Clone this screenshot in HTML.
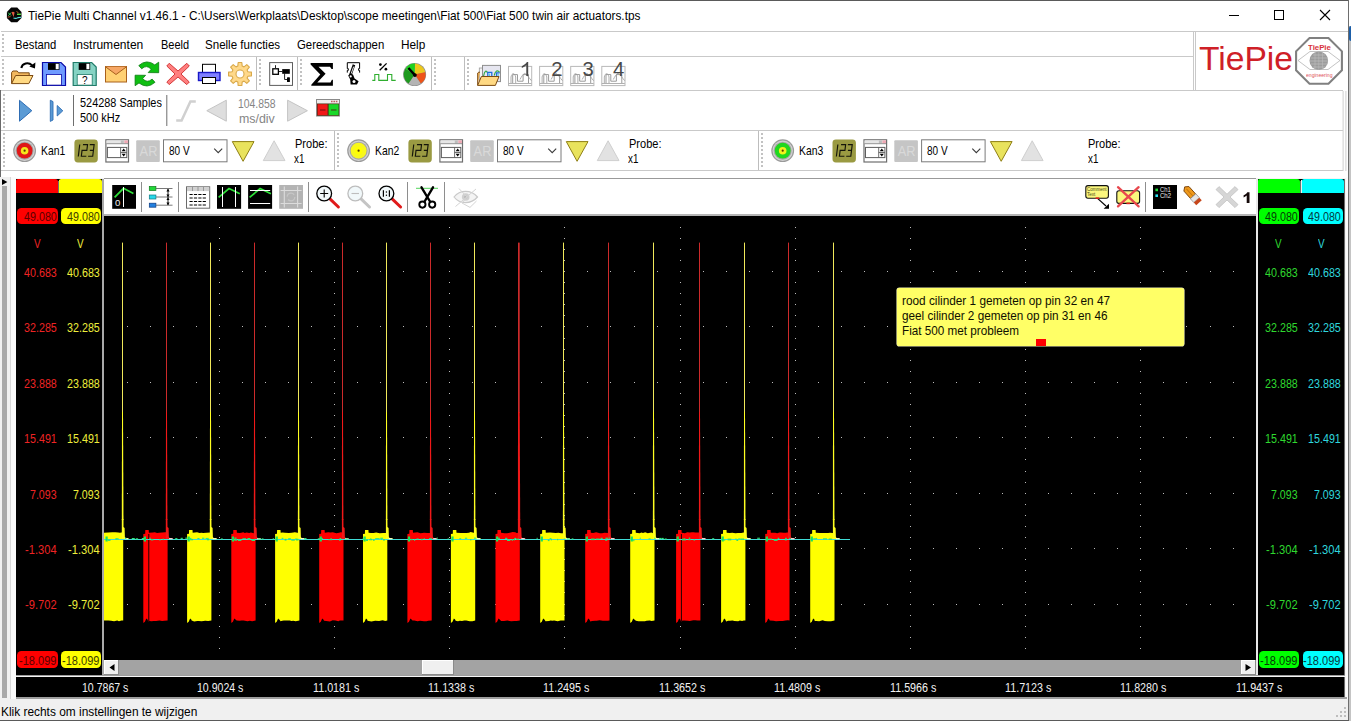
<!DOCTYPE html>
<html><head><meta charset="utf-8"><title>TiePie Multi Channel</title>
<style>
html,body{margin:0;padding:0;overflow:hidden}
body{width:1351px;height:721px;position:relative;overflow:hidden;background:#fff;font-family:"Liberation Sans",sans-serif;font-size:12px}
.b{position:absolute;display:block}
.t{position:absolute;white-space:pre;font-family:"Liberation Sans",sans-serif}
svg{overflow:visible}
</style></head><body>
<div class="b" style="left:0px;top:0px;width:1351px;height:1px;background:#5a5a5a;"></div>
<div class="b" style="left:0px;top:90px;width:1px;height:87px;background:#6a6a6a;"></div>
<div class="b" style="left:1349px;top:0px;width:2px;height:721px;background:#c4c4c4;"></div>
<div class="b" style="left:1349px;top:0px;width:2px;height:26px;background:#fff;"></div>
<div class="b" style="left:1348px;top:0px;width:1px;height:721px;background:#6e6e6e;"></div>
<div class="b" style="left:1349px;top:26px;width:2px;height:15px;background:#1d5fa8;border-radius:2px 0 0 2px"></div>
<svg class="b" style="left:0px;top:0px" width="30" height="30" viewBox="0 0 30 30" ><polygon points="21.50,17.92 17.22,22.20 11.18,22.20 6.90,17.92 6.90,11.88 11.18,7.60 17.22,7.60 21.50,11.88" fill="#050505"/><path d="M8 12.5 L11 15.5 M8.3 15.8 L11 12.6" stroke="#38d060" stroke-width="1" fill="none"/><path d="M11.5 12.2 Q13.3 11 14.6 12.6 L13.6 17 Z" fill="#e05a40"/><path d="M17 14.3 H21" stroke="#58e040" stroke-width="1.4"/><path d="M13.5 18 Q16 19 18 17.6 L21.3 17.3" stroke="#58e0e0" stroke-width="1.1" fill="none"/><path d="M7.5 17.2 L10.5 16.6" stroke="#c05030" stroke-width="1"/><path d="M16.5 11.5 L18.5 12.8" stroke="#c06020" stroke-width="1"/></svg>
<div class="t" style="left:27.60px;top:7px;font-size:13px;line-height:17px;height:17px;color:#000;transform:scaleX(0.9084);transform-origin:0 0;">TiePie Multi Channel v1.46.1 - C:\Users\Werkplaats\Desktop\scope meetingen\Fiat 500\Fiat 500 twin air actuators.tps</div>
<svg class="b" style="left:0px;top:0px" width="1351" height="31" viewBox="0 0 1351 31" ><path d="M1229 15.5 H1239" stroke="#000" stroke-width="1"/><rect x="1274.5" y="10.5" width="9" height="9" fill="none" stroke="#000" stroke-width="1"/><path d="M1320 10 L1330 20 M1330 10 L1320 20" stroke="#000" stroke-width="1.1"/></svg>
<div class="b" style="left:1px;top:31px;width:1347px;height:1px;background:#c9c9c9;"></div>
<div class="b" style="left:1px;top:56px;width:1193px;height:1px;background:#c9c9c9;"></div>
<div class="b" style="left:1px;top:90px;width:1342px;height:1px;background:#c9c9c9;"></div>
<div class="b" style="left:1px;top:130px;width:1342px;height:1px;background:#c9c9c9;"></div>
<div class="b" style="left:1px;top:170px;width:1342px;height:1px;background:#c9c9c9;"></div>
<div class="t" style="left:15.40px;top:37px;font-size:12.4px;line-height:16px;height:16px;color:#000;transform:scaleX(0.9077);transform-origin:0 0;">Bestand</div>
<div class="t" style="left:73.30px;top:37px;font-size:12.4px;line-height:16px;height:16px;color:#000;transform:scaleX(0.9717);transform-origin:0 0;">Instrumenten</div>
<div class="t" style="left:160.50px;top:37px;font-size:12.4px;line-height:16px;height:16px;color:#000;transform:scaleX(0.8864);transform-origin:0 0;">Beeld</div>
<div class="t" style="left:205.20px;top:37px;font-size:12.4px;line-height:16px;height:16px;color:#000;transform:scaleX(0.9324);transform-origin:0 0;">Snelle functies</div>
<div class="t" style="left:297.20px;top:37px;font-size:12.4px;line-height:16px;height:16px;color:#000;transform:scaleX(0.9175);transform-origin:0 0;">Gereedschappen</div>
<div class="t" style="left:401.40px;top:37px;font-size:12.4px;line-height:16px;height:16px;color:#000;transform:scaleX(0.9529);transform-origin:0 0;">Help</div>
<svg class="b" style="left:0px;top:0px" width="1351" height="180" viewBox="0 0 1351 180" ><line x1="3" y1="34" x2="3" y2="54" stroke="#c2c2c2" stroke-width="2" stroke-dasharray="2 2" shape-rendering="crispEdges"/><line x1="3" y1="59" x2="3" y2="87" stroke="#c2c2c2" stroke-width="2" stroke-dasharray="2 2" shape-rendering="crispEdges"/><line x1="4" y1="94" x2="4" y2="128" stroke="#c2c2c2" stroke-width="2" stroke-dasharray="2 2" shape-rendering="crispEdges"/><line x1="4" y1="133" x2="4" y2="167" stroke="#c2c2c2" stroke-width="2" stroke-dasharray="2 2" shape-rendering="crispEdges"/><rect x="256" y="57" width="1" height="33" fill="#bdbdbd"/><line x1="260" y1="59" x2="260" y2="87" stroke="#c2c2c2" stroke-width="2" stroke-dasharray="2 2" shape-rendering="crispEdges"/><rect x="297" y="57" width="1" height="33" fill="#bdbdbd"/><line x1="301" y1="59" x2="301" y2="87" stroke="#c2c2c2" stroke-width="2" stroke-dasharray="2 2" shape-rendering="crispEdges"/><rect x="431" y="57" width="1" height="33" fill="#bdbdbd"/><line x1="435" y1="59" x2="435" y2="87" stroke="#c2c2c2" stroke-width="2" stroke-dasharray="2 2" shape-rendering="crispEdges"/><rect x="464" y="57" width="1" height="33" fill="#bdbdbd"/><line x1="468" y1="59" x2="468" y2="87" stroke="#c2c2c2" stroke-width="2" stroke-dasharray="2 2" shape-rendering="crispEdges"/></svg>
<svg class="b" style="left:0px;top:0px" width="1351" height="95" viewBox="0 0 1351 95" ><rect x="1193" y="31" width="1" height="59" fill="#c9c9c9"/><rect x="1195" y="32" width="1" height="58" fill="#c9c9c9"/><polygon points="1341.91,70.34 1328.49,83.76 1309.51,83.76 1296.09,70.34 1296.09,51.36 1309.51,37.94 1328.49,37.94 1341.91,51.36" fill="#fff" stroke="#808080" stroke-width="2.1"/><path d="M1298 60.5 L1310 51.5 H1328 L1340 60.5 L1328 69.5 H1310 Z" fill="none" stroke="#9a9a9a" stroke-width="0.6"/><circle cx="1318.8" cy="60.7" r="9.3" fill="#9c9c9c"/><path d="M1311 58 H1327 M1310 61 H1328 M1311 64 H1327 M1313 55 H1325 M1313 67 H1325" stroke="#c8c8c8" stroke-width="0.6"/><path d="M1315 52 V69.5 M1318.8 51.5 V70 M1322.5 52 V69.5" stroke="#c0c0c0" stroke-width="0.5"/></svg><div class="t" style="left:1198.60px;top:38px;font-size:34px;line-height:40px;height:40px;color:#cf2027;transform:scaleX(0.9884);transform-origin:0 0;">TiePie</div><div class="t" style="left:1307.60px;top:42px;font-size:7.6px;line-height:11px;height:11px;color:#d8323c;transform:scaleX(1.0292);transform-origin:0 0;font-weight:bold;">TiePie</div><div class="t" style="left:1306.00px;top:71px;font-size:5.4px;line-height:8px;height:8px;color:#e0505a;transform:scaleX(0.9397);transform-origin:0 0;">engineering</div>
<svg class="b" style="left:0px;top:0px" width="1351" height="95" viewBox="0 0 1351 95" ><path d="M11.6 83.5 V72.6 L12.8 71 H17.2 L18.6 72.8 H29.2 V75.5" fill="#f3b85e" stroke="#7c4a12" stroke-width="1" stroke-linejoin="round"/><path d="M11.6 83.6 L15.6 75.5 H33 L28.8 83.6 Z" fill="#ffd983" stroke="#7c4a12" stroke-width="1" stroke-linejoin="round"/><path d="M21.3 68 C22.2 63 28.5 61.8 32 65.2" fill="none" stroke="#000" stroke-width="2"/><path d="M35.4 62.4 L35 68.6 L29.3 66.6 Z" fill="#000"/><path d="M42.5 62.5 H61 L65.5 67 V85.5 H42.5 Z" fill="#6f9bff" stroke="#0a0aa8" stroke-width="1.2" stroke-linejoin="miter"/><rect x="48" y="63.1" width="11.5" height="6.8" fill="#000"/><rect x="55.7" y="63.8" width="3" height="5.4" fill="#fff"/><rect x="46.5" y="74.5" width="15" height="10.6" fill="#fff" stroke="#0a0aa8" stroke-width="0.8"/><path d="M73.2 62.5 H91.7 L96.2 67 V85.5 H73.2 Z" fill="#86d3c4" stroke="#1f7a68" stroke-width="1.2" stroke-linejoin="miter"/><rect x="78.7" y="63.1" width="11.5" height="6.8" fill="#000"/><rect x="86.4" y="63.8" width="3" height="5.4" fill="#fff"/><rect x="77.2" y="74.5" width="15" height="10.6" fill="#fff" stroke="#1f7a68" stroke-width="0.8"/><text x="84.7" y="84.1" font-family="Liberation Sans" font-size="10" text-anchor="middle" fill="#000">?</text><rect x="105.5" y="66.5" width="21" height="15.5" fill="#ffd173" stroke="#a8601c" stroke-width="1"/><path d="M105.5 66.8 L116 74.5 L126.5 66.8" fill="#f6a765" stroke="#a8601c" stroke-width="1"/><path d="M138.8 65.6 Q146.6 58.6 154.8 64.9 L158.7 62.2 L158.7 72.7 L148.2 72.6 L151.2 69.3 Q146.6 64.2 141.7 68.8 Z" fill="#0fbf12" stroke="#0a7a10" stroke-width="0.8" stroke-linejoin="round"/><path d="M138.8 65.6 Q146.6 58.6 154.8 64.9 L158.7 62.2 L158.7 72.7 L148.2 72.6 L151.2 69.3 Q146.6 64.2 141.7 68.8 Z" fill="#0fbf12" stroke="#0a7a10" stroke-width="0.8" stroke-linejoin="round" transform="rotate(180 146.9 73.95)"/><path d="M169.2 63.3 L178 71 L186.8 63.3 L189.3 66 L181 74 L189.3 82 L186.8 84.6 L178 77 L169.2 84.6 L166.8 82 L175 74 L166.8 66 Z" fill="#ff7f7f" stroke="#d43a3a" stroke-width="1" stroke-linejoin="round"/><rect x="202.5" y="64.3" width="13" height="9" fill="#fff" stroke="#000" stroke-width="1"/><rect x="198.5" y="72.5" width="21.5" height="8" fill="#7f7fff" stroke="#1818c8" stroke-width="1.4"/><rect x="202.5" y="77.5" width="13" height="6" fill="#fff" stroke="#000" stroke-width="1"/><polygon points="237.81,66.10 238.15,62.55 241.85,62.55 242.19,66.10 244.04,66.87 246.79,64.60 249.40,67.21 247.13,69.96 247.90,71.81 251.45,72.15 251.45,75.85 247.90,76.19 247.13,78.04 249.40,80.79 246.79,83.40 244.04,81.13 242.19,81.90 241.85,85.45 238.15,85.45 237.81,81.90 235.96,81.13 233.21,83.40 230.60,80.79 232.87,78.04 232.10,76.19 228.55,75.85 228.55,72.15 232.10,71.81 232.87,69.96 230.60,67.21 233.21,64.60 235.96,66.87" fill="#ffd98a" stroke="#d9a94a" stroke-width="1.1" stroke-linejoin="round"/><circle cx="240" cy="74" r="4" fill="#fff" stroke="#d9a94a" stroke-width="1.1"/><rect x="269.7" y="62.6" width="22.8" height="22.8" fill="#fff" stroke="#5e5e5e" stroke-width="1"/><rect x="272.8" y="68.8" width="5.6" height="5.5" fill="#fff" stroke="#000" stroke-width="1.3"/><path d="M275.5 65.2 V68.4 M279 71.5 H282.4 M284.6 73.6 V79.5 H287.2" stroke="#222" stroke-width="1" fill="none"/><rect x="282.2" y="69.1" width="7.6" height="4.7" fill="#000"/><rect x="287" y="77.2" width="2.9" height="4.8" rx="0.6" fill="#000"/><path d="M310.6 63.1 H332.9 V69.1 H331.6 L330 66.8 H318.5 L325.6 73.8 L317.3 82.6 H330.5 L331.9 79.7 H332.9 V85.8 H311.3 V84.8 L320.3 74.6 L310.6 64.5 Z" fill="#000"/><path d="M347.3 72.6 V70.4 H348.3 V68.6 H347.3 V62.7 H359.6 V68.6 H358.6 V70.4 H359.6 V72.6" fill="none" stroke="#000" stroke-width="1"/><path d="M354 64.8 L350.4 75" stroke="#000" stroke-width="2.6"/><path d="M353.7 66.6 L351.2 73.6" stroke="#fff" stroke-width="0.9"/><path d="M348.2 75.4 L350.2 73.6 L353 74.6 L354.6 78.4 L358.6 81.2 L357 84.4 L350.6 84.6 L350.2 79.6 Z" fill="#000"/><circle cx="350.7" cy="76.4" r="1.1" fill="#fff"/><circle cx="354" cy="81.6" r="1.5" fill="#fff"/><path d="M372.3 80.4 H374.8 V74.5 H378.8 V80.4 H387.5 V74.5 H391.8 V80.4 H395.7" fill="none" stroke="#2fae2f" stroke-width="1.1"/><path d="M386.6 63.4 L379.7 70.3" stroke="#000" stroke-width="1.3"/><circle cx="380.4" cy="64.6" r="1.35" fill="#000"/><circle cx="385.9" cy="69.2" r="1.35" fill="#000"/><circle cx="414.6" cy="74.5" r="11.5" fill="#909090"/><path d="M414.60 74.50 L414.98 63.61 A10.9 10.9 0 0 1 425.26 72.23 Z" fill="#edc81c"/><path d="M414.60 74.50 L425.26 72.23 A10.9 10.9 0 0 1 420.70 83.54 Z" fill="#ee5318"/><path d="M414.60 74.50 L420.70 83.54 A10.9 10.9 0 0 1 408.50 83.54 Z" fill="#b4b4b4"/><path d="M414.60 74.50 L408.50 83.54 A10.9 10.9 0 0 1 405.36 68.72 Z" fill="#1f9a1f"/><path d="M414.60 74.50 L405.36 68.72 A10.9 10.9 0 0 1 414.98 63.61 Z" fill="#1fd01f"/><path d="M414.90 75.10 L408.4 68" stroke="#000" stroke-width="2.4"/><circle cx="414.9" cy="75.1" r="1.9" fill="#000"/><rect x="479.3" y="68" width="4" height="12" fill="#f4f4f4" stroke="#9a9a9a" stroke-width="0.8"/><rect x="482.5" y="65.4" width="18" height="16.2" fill="#e6e6f0" stroke="#8e8e8e" stroke-width="1"/><path d="M483.6 76 C484.6 70.6 486.4 70 487.6 73 M494.2 75.5 C495.4 70.4 497.6 69.6 499.6 72.4" fill="none" stroke="#2fa845" stroke-width="1.2"/><path d="M487.8 76.5 V72.4 H491.8 V76.5 M496.6 76.5 V72.8 H499.6" fill="none" stroke="#1f6fe0" stroke-width="1.3"/><path d="M489.6 73.5 V76.5 M498.2 73.8 V76.5" stroke="#40c8e8" stroke-width="1"/><path d="M477.7 85.2 V73 L478.8 72.2 H480" fill="#f3b85e" stroke="#7c4a12" stroke-width="1"/><path d="M477.6 85.4 L481.4 76.5 H499 L495.4 85.4 Z" fill="#ffd983" stroke="#7c4a12" stroke-width="1" stroke-linejoin="round"/><rect x="508.5" y="66.4" width="23.2" height="19.2" fill="#fff" stroke="#b9b9b9" stroke-width="1"/><path d="M511 83.6 V77 C511.9 72.6 514.7 72.6 515.7 77 V83.6 M520 79.5 C521.3 77 523 74 524.7 73.4 C526.7 74 529 78 531.5 80.8" fill="none" stroke="#adadad" stroke-width="1"/><path d="M512.7 83.6 V74.6 H517.5 V81.2 H523.1 V74.6 H528.5 V83.6" fill="none" stroke="#9a9a9a" stroke-width="1"/><path d="M508.5 83.5 H531.5" stroke="#b0b0b0" stroke-width="1"/><rect x="539.6" y="66.4" width="23.2" height="19.2" fill="#fff" stroke="#b9b9b9" stroke-width="1"/><path d="M542.1 83.6 V77 C543 72.6 545.8 72.6 546.8 77 V83.6 M551.1 79.5 C552.4 77 554.1 74 555.8 73.4 C557.8 74 560.1 78 562.6 80.8" fill="none" stroke="#adadad" stroke-width="1"/><path d="M543.8 83.6 V74.6 H548.6 V81.2 H554.2 V74.6 H559.6 V83.6" fill="none" stroke="#9a9a9a" stroke-width="1"/><path d="M539.6 83.5 H562.6" stroke="#b0b0b0" stroke-width="1"/><rect x="570.7" y="66.4" width="23.2" height="19.2" fill="#fff" stroke="#b9b9b9" stroke-width="1"/><path d="M573.2 83.6 V77 C574.1 72.6 576.9 72.6 577.9 77 V83.6 M582.2 79.5 C583.5 77 585.2 74 586.9 73.4 C588.9 74 591.2 78 593.7 80.8" fill="none" stroke="#adadad" stroke-width="1"/><path d="M574.9 83.6 V74.6 H579.7 V81.2 H585.3 V74.6 H590.7 V83.6" fill="none" stroke="#9a9a9a" stroke-width="1"/><path d="M570.7 83.5 H593.7" stroke="#b0b0b0" stroke-width="1"/><rect x="601.8" y="66.4" width="23.2" height="19.2" fill="#fff" stroke="#b9b9b9" stroke-width="1"/><path d="M604.3 83.6 V77 C605.2 72.6 608 72.6 609 77 V83.6 M613.3 79.5 C614.6 77 616.3 74 618 73.4 C620 74 622.3 78 624.8 80.8" fill="none" stroke="#adadad" stroke-width="1"/><path d="M606 83.6 V74.6 H610.8 V81.2 H616.4 V74.6 H621.8 V83.6" fill="none" stroke="#9a9a9a" stroke-width="1"/><path d="M601.8 83.5 H624.8" stroke="#b0b0b0" stroke-width="1"/></svg><svg class="b" style="left:0px;top:0px" width="1351" height="95" viewBox="0 0 1351 95" ><path d="M528.2 76.1 H526.3 V65.3 C525.1 66.5 523.5 67.4 521.8 68 V66.2 C524 65.2 526 63.6 526.9 62 H528.2 Z" fill="#484848"/></svg><div class="t" style="left:551.20px;top:57px;font-size:20.3px;line-height:24px;height:24px;color:#484848;">2</div><div class="t" style="left:582.50px;top:57px;font-size:20.3px;line-height:24px;height:24px;color:#484848;">3</div><div class="t" style="left:612.90px;top:57px;font-size:20.3px;line-height:24px;height:24px;color:#484848;">4</div>
<svg class="b" style="left:0px;top:0px" width="1351" height="135" viewBox="0 0 1351 135" ><path d="M19.5 100.3 L31.8 110.7 L19.5 121.2 Z" fill="#5b9bd5" stroke="#2e6db4" stroke-width="1" stroke-linejoin="round"/><path d="M50.3 100.2 L53 101.6 V120 L50.3 121.4 Z" fill="#5b9bd5" stroke="#2e6db4" stroke-width="0.9" stroke-linejoin="round"/><path d="M57.2 105.5 L62.8 110.8 L57.2 116 Z" fill="#5b9bd5" stroke="#2e6db4" stroke-width="0.9" stroke-linejoin="round"/><rect x="73" y="95" width="1" height="31" fill="#6e6e6e"/><rect x="166.3" y="95" width="1" height="31" fill="#6e6e6e"/><path d="M176.2 120.6 H181.6 L190.4 101.4 H195.8" fill="none" stroke="#d0d0d0" stroke-width="2.5"/><path d="M226.3 100.2 V121.2 L206.8 110.7 Z" fill="#dedede" stroke="#c4c4c4" stroke-width="1" stroke-linejoin="round"/><path d="M287.6 100.2 V121.2 L307.4 110.7 Z" fill="#dedede" stroke="#c4c4c4" stroke-width="1" stroke-linejoin="round"/><rect x="316.5" y="99.5" width="23" height="16.5" fill="#ededed" stroke="#8a8a8a" stroke-width="1"/><rect x="317" y="103.5" width="22" height="12.3" fill="#4a2a10"/><rect x="317.6" y="104.2" width="10" height="11" fill="#f01818"/><rect x="328.6" y="104.2" width="10" height="11" fill="#18d828"/><path d="M320 110 H325.5 M331 110 H336.5" stroke="#501010" stroke-width="1.6" opacity=".55"/><path d="M331 101.5 H337.5" stroke="#c06060" stroke-width="1.4" stroke-dasharray="1.6 0.8"/></svg><div class="t" style="left:79.60px;top:95px;font-size:12.4px;line-height:16px;height:16px;color:#000;transform:scaleX(0.8802);transform-origin:0 0;">524288 Samples</div><div class="t" style="left:79.60px;top:110px;font-size:12.4px;line-height:16px;height:16px;color:#000;transform:scaleX(0.8835);transform-origin:0 0;">500 kHz</div><div class="t" style="left:238.20px;top:96px;font-size:12.4px;line-height:16px;height:16px;color:#858585;transform:scaleX(0.8393);transform-origin:0 0;">104.858</div><div class="t" style="left:238.80px;top:111px;font-size:12.4px;line-height:16px;height:16px;color:#858585;transform:scaleX(0.9986);transform-origin:0 0;">ms/div</div>
<svg class="b" style="left:0px;top:0px" width="1351" height="175" viewBox="0 0 1351 175" ><circle cx="24.6" cy="150.7" r="11.4" fill="#9a9a9a"/><circle cx="24.6" cy="150.7" r="10.2" fill="#d2d2d2"/><circle cx="24.6" cy="150.7" r="9" fill="#a6a6a6"/><circle cx="24.6" cy="150.7" r="7.9" fill="#e01818"/><circle cx="24.6" cy="150.7" r="3.8" fill="#f4e81c"/><circle cx="24.6" cy="150.7" r="1.1" fill="#5a3a00"/><rect x="74.4" y="139.4" width="23.4" height="23.1" rx="3.4" fill="#9a9a42"/><g stroke="#15150a" stroke-width="1.15" fill="none" transform="translate(92.9 0) skewX(-7) translate(-74.4 0)"><path d="M79 144.6 V156.4"/><path d="M82.2 144.6 H86.8 V150.4 H82 V156.2 H87"/><path d="M89 144.6 H93.4 V156.2 H88.8 M89.8 150.4 H93.4"/></g><rect x="105.9" y="139.8" width="22.6" height="22.2" fill="#fff" stroke="#6e6e6e" stroke-width="1.2"/><rect x="106.5" y="140.4" width="21.4" height="3" fill="#e6e6e6"/><rect x="120.8" y="140.4" width="3" height="3" fill="#bdbdbd"/><rect x="124.3" y="140.4" width="3.6" height="3" fill="#f0a8b4"/><path d="M106.4 143.7 H128" stroke="#8a8a8a" stroke-width="0.9"/><rect x="107.4" y="147.4" width="19.4" height="10.2" fill="#fff" stroke="#5e5e5e" stroke-width="1"/><path d="M120.6 147.4 V157.6 M120.6 152.5 H126.8" stroke="#5e5e5e" stroke-width="0.9"/><path d="M121.6 151.2 L123.7 148.6 L125.8 151.2 Z M121.6 153.8 L123.7 156.4 L125.8 153.8 Z" fill="#000"/><rect x="136.2" y="140.3" width="23.6" height="21.6" rx="1" fill="#c5c5c5"/><text x="139.6" y="156.2" font-family="Liberation Sans" font-size="15.4" fill="#d9d9d9" textLength="17.8" lengthAdjust="spacingAndGlyphs">AR</text><rect x="163.5" y="139.8" width="63.5" height="22" fill="#fff" stroke="#7a7a7a" stroke-width="1"/><path d="M214.2 148.6 L218.2 152.6 L222.2 148.6" fill="none" stroke="#3a3a3a" stroke-width="1.1"/><path d="M232.3 141.6 H254 L243.1 161.3 Z" fill="#e9e35d" stroke="#8f7f14" stroke-width="1" stroke-linejoin="round"/><path d="M263.3 160.6 H285 L274.1 140.8 Z" fill="#e2e2e2" stroke="#cfcfcf" stroke-width="1" stroke-linejoin="round"/></svg><div class="t" style="left:40.60px;top:143px;font-size:12.4px;line-height:16px;height:16px;color:#000;transform:scaleX(0.8359);transform-origin:0 0;">Kan1</div><div class="t" style="left:168.60px;top:143px;font-size:12.4px;line-height:16px;height:16px;color:#000;transform:scaleX(0.8078);transform-origin:0 0;">80 V</div><div class="t" style="left:294.70px;top:136px;font-size:12.4px;line-height:16px;height:16px;color:#000;transform:scaleX(0.8892);transform-origin:0 0;">Probe:</div><div class="t" style="left:294.40px;top:151px;font-size:12.4px;line-height:16px;height:16px;color:#000;transform:scaleX(0.7939);transform-origin:0 0;">x1</div><svg class="b" style="left:0px;top:0px" width="1351" height="175" viewBox="0 0 1351 175" ><circle cx="358.6" cy="150.7" r="11.4" fill="#9a9a9a"/><circle cx="358.6" cy="150.7" r="10.2" fill="#d2d2d2"/><circle cx="358.6" cy="150.7" r="9" fill="#a6a6a6"/><circle cx="358.6" cy="150.7" r="7.9" fill="#f8f81a"/><circle cx="358.6" cy="150.7" r="3.8" fill="#ffff00"/><circle cx="358.6" cy="150.7" r="1.1" fill="#5a3a00"/><rect x="408.4" y="139.4" width="23.4" height="23.1" rx="3.4" fill="#9a9a42"/><g stroke="#15150a" stroke-width="1.15" fill="none" transform="translate(426.9 0) skewX(-7) translate(-408.4 0)"><path d="M413 144.6 V156.4"/><path d="M416.2 144.6 H420.8 V150.4 H416 V156.2 H421"/><path d="M423 144.6 H427.4 V156.2 H422.8 M423.8 150.4 H427.4"/></g><rect x="439.9" y="139.8" width="22.6" height="22.2" fill="#fff" stroke="#6e6e6e" stroke-width="1.2"/><rect x="440.5" y="140.4" width="21.4" height="3" fill="#e6e6e6"/><rect x="454.8" y="140.4" width="3" height="3" fill="#bdbdbd"/><rect x="458.3" y="140.4" width="3.6" height="3" fill="#f0a8b4"/><path d="M440.4 143.7 H462" stroke="#8a8a8a" stroke-width="0.9"/><rect x="441.4" y="147.4" width="19.4" height="10.2" fill="#fff" stroke="#5e5e5e" stroke-width="1"/><path d="M454.6 147.4 V157.6 M454.6 152.5 H460.8" stroke="#5e5e5e" stroke-width="0.9"/><path d="M455.6 151.2 L457.7 148.6 L459.8 151.2 Z M455.6 153.8 L457.7 156.4 L459.8 153.8 Z" fill="#000"/><rect x="470.2" y="140.3" width="23.6" height="21.6" rx="1" fill="#c5c5c5"/><text x="473.6" y="156.2" font-family="Liberation Sans" font-size="15.4" fill="#d9d9d9" textLength="17.8" lengthAdjust="spacingAndGlyphs">AR</text><rect x="497.5" y="139.8" width="63.5" height="22" fill="#fff" stroke="#7a7a7a" stroke-width="1"/><path d="M548.2 148.6 L552.2 152.6 L556.2 148.6" fill="none" stroke="#3a3a3a" stroke-width="1.1"/><path d="M566.3 141.6 H588 L577.1 161.3 Z" fill="#e9e35d" stroke="#8f7f14" stroke-width="1" stroke-linejoin="round"/><path d="M597.3 160.6 H619 L608.1 140.8 Z" fill="#e2e2e2" stroke="#cfcfcf" stroke-width="1" stroke-linejoin="round"/></svg><div class="t" style="left:374.60px;top:143px;font-size:12.4px;line-height:16px;height:16px;color:#000;transform:scaleX(0.8359);transform-origin:0 0;">Kan2</div><div class="t" style="left:502.60px;top:143px;font-size:12.4px;line-height:16px;height:16px;color:#000;transform:scaleX(0.8078);transform-origin:0 0;">80 V</div><div class="t" style="left:628.70px;top:136px;font-size:12.4px;line-height:16px;height:16px;color:#000;transform:scaleX(0.8892);transform-origin:0 0;">Probe:</div><div class="t" style="left:628.40px;top:151px;font-size:12.4px;line-height:16px;height:16px;color:#000;transform:scaleX(0.7939);transform-origin:0 0;">x1</div><svg class="b" style="left:0px;top:0px" width="1351" height="175" viewBox="0 0 1351 175" ><circle cx="782.7" cy="150.7" r="11.4" fill="#9a9a9a"/><circle cx="782.7" cy="150.7" r="10.2" fill="#d2d2d2"/><circle cx="782.7" cy="150.7" r="9" fill="#a6a6a6"/><circle cx="782.7" cy="150.7" r="7.9" fill="#20d820"/><circle cx="782.7" cy="150.7" r="3.8" fill="#f2f21c"/><circle cx="782.7" cy="150.7" r="1.1" fill="#5a3a00"/><rect x="832.5" y="139.4" width="23.4" height="23.1" rx="3.4" fill="#9a9a42"/><g stroke="#15150a" stroke-width="1.15" fill="none" transform="translate(851 0) skewX(-7) translate(-832.5 0)"><path d="M837.1 144.6 V156.4"/><path d="M840.3 144.6 H844.9 V150.4 H840.1 V156.2 H845.1"/><path d="M847.1 144.6 H851.5 V156.2 H846.9 M847.9 150.4 H851.5"/></g><rect x="864" y="139.8" width="22.6" height="22.2" fill="#fff" stroke="#6e6e6e" stroke-width="1.2"/><rect x="864.6" y="140.4" width="21.4" height="3" fill="#e6e6e6"/><rect x="878.9" y="140.4" width="3" height="3" fill="#bdbdbd"/><rect x="882.4" y="140.4" width="3.6" height="3" fill="#f0a8b4"/><path d="M864.5 143.7 H886.1" stroke="#8a8a8a" stroke-width="0.9"/><rect x="865.5" y="147.4" width="19.4" height="10.2" fill="#fff" stroke="#5e5e5e" stroke-width="1"/><path d="M878.7 147.4 V157.6 M878.7 152.5 H884.9" stroke="#5e5e5e" stroke-width="0.9"/><path d="M879.7 151.2 L881.8 148.6 L883.9 151.2 Z M879.7 153.8 L881.8 156.4 L883.9 153.8 Z" fill="#000"/><rect x="894.3" y="140.3" width="23.6" height="21.6" rx="1" fill="#c5c5c5"/><text x="897.7" y="156.2" font-family="Liberation Sans" font-size="15.4" fill="#d9d9d9" textLength="17.8" lengthAdjust="spacingAndGlyphs">AR</text><rect x="921.6" y="139.8" width="63.5" height="22" fill="#fff" stroke="#7a7a7a" stroke-width="1"/><path d="M972.3 148.6 L976.3 152.6 L980.3 148.6" fill="none" stroke="#3a3a3a" stroke-width="1.1"/><path d="M990.4 141.6 H1012.1 L1001.2 161.3 Z" fill="#e9e35d" stroke="#8f7f14" stroke-width="1" stroke-linejoin="round"/><path d="M1021.4 160.6 H1043.1 L1032.2 140.8 Z" fill="#e2e2e2" stroke="#cfcfcf" stroke-width="1" stroke-linejoin="round"/></svg><div class="t" style="left:798.70px;top:143px;font-size:12.4px;line-height:16px;height:16px;color:#000;transform:scaleX(0.8359);transform-origin:0 0;">Kan3</div><div class="t" style="left:926.70px;top:143px;font-size:12.4px;line-height:16px;height:16px;color:#000;transform:scaleX(0.8078);transform-origin:0 0;">80 V</div><div class="t" style="left:1088.20px;top:136px;font-size:12.4px;line-height:16px;height:16px;color:#000;transform:scaleX(0.8892);transform-origin:0 0;">Probe:</div><div class="t" style="left:1087.90px;top:151px;font-size:12.4px;line-height:16px;height:16px;color:#000;transform:scaleX(0.7939);transform-origin:0 0;">x1</div><svg class="b" style="left:0px;top:0px" width="1351" height="175" viewBox="0 0 1351 175" ><rect x="334" y="131" width="1" height="39" fill="#bdbdbd"/><line x1="338" y1="133" x2="338" y2="167" stroke="#c2c2c2" stroke-width="2" stroke-dasharray="2 2" shape-rendering="crispEdges"/><rect x="758" y="131" width="1" height="39" fill="#bdbdbd"/><line x1="762" y1="133" x2="762" y2="167" stroke="#c2c2c2" stroke-width="2" stroke-dasharray="2 2" shape-rendering="crispEdges"/><rect x="1342.6" y="91" width="1" height="80" fill="#d0d0d0"/><rect x="1345.4" y="91" width="1" height="82" fill="#d0d0d0"/></svg>
<div class="b" style="left:1px;top:171px;width:1347px;height:7px;background:#fff;"></div><div class="b" style="left:1px;top:171px;width:1347px;height:1px;background:#fff;"></div><div class="b" style="left:1px;top:177.6px;width:1347px;height:522px;background:#f4f4f4;"></div><div class="b" style="left:0px;top:177px;width:10px;height:523px;background:#f0f0f0;"></div><div class="b" style="left:2px;top:186px;width:4.5px;height:512px;background:#a8a8a8;"></div><div class="b" style="left:10px;top:177px;width:6px;height:523px;background:#fbfbfb;"></div><div class="b" style="left:9.5px;top:177px;width:1.5px;height:523px;background:#d9d9d9;"></div><svg class="b" style="left:0;top:176px" width="12" height="12"><path d="M2 3 L7.4 6 L2 9 Z" fill="#000"/></svg><div class="b" style="left:16px;top:179px;width:1328.5px;height:518.5px;background:#000;"></div><div class="b" style="left:16px;top:178.8px;width:41.6px;height:14.2px;background:#ff0000;border-radius:2px 3px 0 0"></div><div class="b" style="left:57.6px;top:180.5px;width:0.9px;height:12.5px;background:#707070;"></div><div class="b" style="left:58.5px;top:179.5px;width:1px;height:13.5px;background:#f0f0e0;"></div><div class="b" style="left:59.4px;top:178.8px;width:43px;height:14.2px;background:#ffff00;border-radius:2px 3px 0 0"></div><div class="b" style="left:1258.2px;top:178.8px;width:41.5px;height:14px;background:#00ff00;border-radius:2px 3px 0 0"></div><div class="b" style="left:1299.7px;top:180.5px;width:1px;height:12.3px;background:#707070;"></div><div class="b" style="left:1300.7px;top:179.5px;width:1.2px;height:13.3px;background:#e8f4f0;"></div><div class="b" style="left:1301.9px;top:178.8px;width:42.5px;height:14px;background:#00ffff;border-radius:2px 3px 0 0"></div><div class="b" style="left:102.4px;top:179px;width:1.7px;height:498px;background:#a9a9a9;"></div><div class="b" style="left:1256px;top:179px;width:2px;height:498px;background:#e9e9e9;"></div><div class="b" style="left:1344.3px;top:179px;width:1.2px;height:520px;background:#6a6a6a;"></div><div class="b" style="left:1345.5px;top:177px;width:2.5px;height:523px;background:#fcfcfc;"></div><div class="b" style="left:104px;top:178px;width:1152px;height:1px;background:#9a9a9a;"></div><div class="b" style="left:104px;top:179px;width:1152px;height:35px;background:#fff;"></div><div class="b" style="left:104px;top:214px;width:1152px;height:2px;background:#b5b5b5;"></div><div class="b" style="left:104px;top:660px;width:1152px;height:15.3px;background:#a3a3a3;"></div><div class="b" style="left:104px;top:660px;width:15px;height:15.3px;background:#f0f0f0;box-shadow:inset -1px -1px 0 #8a8a8a, inset 1px 1px 0 #fff"></div><div class="b" style="left:1241px;top:660px;width:15px;height:15.3px;background:#f0f0f0;box-shadow:inset -1px -1px 0 #8a8a8a, inset 1px 1px 0 #fff"></div><div class="b" style="left:422px;top:660px;width:32.4px;height:15.3px;background:#f0f0f0;box-shadow:inset -1px -1px 0 #8a8a8a, inset 1px 1px 0 #fff"></div><svg class="b" style="left:104px;top:660px" width="1152" height="16"><path d="M10.5 4 V11 L5.5 7.5 Z M1141.5 4 V11 L1147 7.5 Z" fill="#000"/></svg><div class="b" style="left:16px;top:674.7px;width:1328.5px;height:1.2px;background:#9c9c9c;"></div><div class="b" style="left:16px;top:675.9px;width:1328.5px;height:1.1px;background:#f4f4f4;"></div><div class="b" style="left:16px;top:697px;width:1330.5px;height:2.2px;background:#9e9e9e;"></div>
<svg class="b" style="left:104px;top:216px" width="1152" height="444" viewBox="104 216 1152 444">
<rect x="104" y="216" width="1152" height="444" fill="#000"/>
<path d="M127 271.5h1M150 271.5h1M173 271.5h1M196 271.5h1M219 271.5h1M242 271.5h1M265 271.5h1M288 271.5h1M311 271.5h1M334 271.5h1M357 271.5h1M380 271.5h1M403 271.5h1M426 271.5h1M449 271.5h1M472 271.5h1M495 271.5h1M518 271.5h1M541 271.5h1M564 271.5h1M587 271.5h1M610 271.5h1M634 271.5h1M657 271.5h1M680 271.5h1M703 271.5h1M726 271.5h1M749 271.5h1M772 271.5h1M795 271.5h1M818 271.5h1M841 271.5h1M864 271.5h1M887 271.5h1M910 271.5h1M933 271.5h1M956 271.5h1M979 271.5h1M1002 271.5h1M1025 271.5h1M1048 271.5h1M1071 271.5h1M1094 271.5h1M1117 271.5h1M1140 271.5h1M1163 271.5h1M1186 271.5h1M1210 271.5h1M1233 271.5h1M127 326.5h1M150 326.5h1M173 326.5h1M196 326.5h1M219 326.5h1M242 326.5h1M265 326.5h1M288 326.5h1M311 326.5h1M334 326.5h1M357 326.5h1M380 326.5h1M403 326.5h1M426 326.5h1M449 326.5h1M472 326.5h1M495 326.5h1M518 326.5h1M541 326.5h1M564 326.5h1M587 326.5h1M610 326.5h1M634 326.5h1M657 326.5h1M680 326.5h1M703 326.5h1M726 326.5h1M749 326.5h1M772 326.5h1M795 326.5h1M818 326.5h1M841 326.5h1M864 326.5h1M887 326.5h1M910 326.5h1M933 326.5h1M956 326.5h1M979 326.5h1M1002 326.5h1M1025 326.5h1M1048 326.5h1M1071 326.5h1M1094 326.5h1M1117 326.5h1M1140 326.5h1M1163 326.5h1M1186 326.5h1M1210 326.5h1M1233 326.5h1M127 382.5h1M150 382.5h1M173 382.5h1M196 382.5h1M219 382.5h1M242 382.5h1M265 382.5h1M288 382.5h1M311 382.5h1M334 382.5h1M357 382.5h1M380 382.5h1M403 382.5h1M426 382.5h1M449 382.5h1M472 382.5h1M495 382.5h1M518 382.5h1M541 382.5h1M564 382.5h1M587 382.5h1M610 382.5h1M634 382.5h1M657 382.5h1M680 382.5h1M703 382.5h1M726 382.5h1M749 382.5h1M772 382.5h1M795 382.5h1M818 382.5h1M841 382.5h1M864 382.5h1M887 382.5h1M910 382.5h1M933 382.5h1M956 382.5h1M979 382.5h1M1002 382.5h1M1025 382.5h1M1048 382.5h1M1071 382.5h1M1094 382.5h1M1117 382.5h1M1140 382.5h1M1163 382.5h1M1186 382.5h1M1210 382.5h1M1233 382.5h1M127 437.5h1M150 437.5h1M173 437.5h1M196 437.5h1M219 437.5h1M242 437.5h1M265 437.5h1M288 437.5h1M311 437.5h1M334 437.5h1M357 437.5h1M380 437.5h1M403 437.5h1M426 437.5h1M449 437.5h1M472 437.5h1M495 437.5h1M518 437.5h1M541 437.5h1M564 437.5h1M587 437.5h1M610 437.5h1M634 437.5h1M657 437.5h1M680 437.5h1M703 437.5h1M726 437.5h1M749 437.5h1M772 437.5h1M795 437.5h1M818 437.5h1M841 437.5h1M864 437.5h1M887 437.5h1M910 437.5h1M933 437.5h1M956 437.5h1M979 437.5h1M1002 437.5h1M1025 437.5h1M1048 437.5h1M1071 437.5h1M1094 437.5h1M1117 437.5h1M1140 437.5h1M1163 437.5h1M1186 437.5h1M1210 437.5h1M1233 437.5h1M127 493.5h1M150 493.5h1M173 493.5h1M196 493.5h1M219 493.5h1M242 493.5h1M265 493.5h1M288 493.5h1M311 493.5h1M334 493.5h1M357 493.5h1M380 493.5h1M403 493.5h1M426 493.5h1M449 493.5h1M472 493.5h1M495 493.5h1M518 493.5h1M541 493.5h1M564 493.5h1M587 493.5h1M610 493.5h1M634 493.5h1M657 493.5h1M680 493.5h1M703 493.5h1M726 493.5h1M749 493.5h1M772 493.5h1M795 493.5h1M818 493.5h1M841 493.5h1M864 493.5h1M887 493.5h1M910 493.5h1M933 493.5h1M956 493.5h1M979 493.5h1M1002 493.5h1M1025 493.5h1M1048 493.5h1M1071 493.5h1M1094 493.5h1M1117 493.5h1M1140 493.5h1M1163 493.5h1M1186 493.5h1M1210 493.5h1M1233 493.5h1M127 548.5h1M150 548.5h1M173 548.5h1M196 548.5h1M219 548.5h1M242 548.5h1M265 548.5h1M288 548.5h1M311 548.5h1M334 548.5h1M357 548.5h1M380 548.5h1M403 548.5h1M426 548.5h1M449 548.5h1M472 548.5h1M495 548.5h1M518 548.5h1M541 548.5h1M564 548.5h1M587 548.5h1M610 548.5h1M634 548.5h1M657 548.5h1M680 548.5h1M703 548.5h1M726 548.5h1M749 548.5h1M772 548.5h1M795 548.5h1M818 548.5h1M841 548.5h1M864 548.5h1M887 548.5h1M910 548.5h1M933 548.5h1M956 548.5h1M979 548.5h1M1002 548.5h1M1025 548.5h1M1048 548.5h1M1071 548.5h1M1094 548.5h1M1117 548.5h1M1140 548.5h1M1163 548.5h1M1186 548.5h1M1210 548.5h1M1233 548.5h1M127 604.5h1M150 604.5h1M173 604.5h1M196 604.5h1M219 604.5h1M242 604.5h1M265 604.5h1M288 604.5h1M311 604.5h1M334 604.5h1M357 604.5h1M380 604.5h1M403 604.5h1M426 604.5h1M449 604.5h1M472 604.5h1M495 604.5h1M518 604.5h1M541 604.5h1M564 604.5h1M587 604.5h1M610 604.5h1M634 604.5h1M657 604.5h1M680 604.5h1M703 604.5h1M726 604.5h1M749 604.5h1M772 604.5h1M795 604.5h1M818 604.5h1M841 604.5h1M864 604.5h1M887 604.5h1M910 604.5h1M933 604.5h1M956 604.5h1M979 604.5h1M1002 604.5h1M1025 604.5h1M1048 604.5h1M1071 604.5h1M1094 604.5h1M1117 604.5h1M1140 604.5h1M1163 604.5h1M1186 604.5h1M1210 604.5h1M1233 604.5h1M219 227.5h1M219 238.5h1M219 249.5h1M219 260.5h1M219 282.5h1M219 293.5h1M219 304.5h1M219 315.5h1M219 338.5h1M219 349.5h1M219 360.5h1M219 371.5h1M219 393.5h1M219 404.5h1M219 415.5h1M219 426.5h1M219 448.5h1M219 459.5h1M219 471.5h1M219 482.5h1M219 504.5h1M219 515.5h1M219 526.5h1M219 537.5h1M219 559.5h1M219 570.5h1M219 581.5h1M219 592.5h1M219 615.5h1M219 626.5h1M219 637.5h1M219 648.5h1M334 227.5h1M334 238.5h1M334 249.5h1M334 260.5h1M334 282.5h1M334 293.5h1M334 304.5h1M334 315.5h1M334 338.5h1M334 349.5h1M334 360.5h1M334 371.5h1M334 393.5h1M334 404.5h1M334 415.5h1M334 426.5h1M334 448.5h1M334 459.5h1M334 471.5h1M334 482.5h1M334 504.5h1M334 515.5h1M334 526.5h1M334 537.5h1M334 559.5h1M334 570.5h1M334 581.5h1M334 592.5h1M334 615.5h1M334 626.5h1M334 637.5h1M334 648.5h1M449 227.5h1M449 238.5h1M449 249.5h1M449 260.5h1M449 282.5h1M449 293.5h1M449 304.5h1M449 315.5h1M449 338.5h1M449 349.5h1M449 360.5h1M449 371.5h1M449 393.5h1M449 404.5h1M449 415.5h1M449 426.5h1M449 448.5h1M449 459.5h1M449 471.5h1M449 482.5h1M449 504.5h1M449 515.5h1M449 526.5h1M449 537.5h1M449 559.5h1M449 570.5h1M449 581.5h1M449 592.5h1M449 615.5h1M449 626.5h1M449 637.5h1M449 648.5h1M564 227.5h1M564 238.5h1M564 249.5h1M564 260.5h1M564 282.5h1M564 293.5h1M564 304.5h1M564 315.5h1M564 338.5h1M564 349.5h1M564 360.5h1M564 371.5h1M564 393.5h1M564 404.5h1M564 415.5h1M564 426.5h1M564 448.5h1M564 459.5h1M564 471.5h1M564 482.5h1M564 504.5h1M564 515.5h1M564 526.5h1M564 537.5h1M564 559.5h1M564 570.5h1M564 581.5h1M564 592.5h1M564 615.5h1M564 626.5h1M564 637.5h1M564 648.5h1M680 227.5h1M680 238.5h1M680 249.5h1M680 260.5h1M680 282.5h1M680 293.5h1M680 304.5h1M680 315.5h1M680 338.5h1M680 349.5h1M680 360.5h1M680 371.5h1M680 393.5h1M680 404.5h1M680 415.5h1M680 426.5h1M680 448.5h1M680 459.5h1M680 471.5h1M680 482.5h1M680 504.5h1M680 515.5h1M680 526.5h1M680 537.5h1M680 559.5h1M680 570.5h1M680 581.5h1M680 592.5h1M680 615.5h1M680 626.5h1M680 637.5h1M680 648.5h1M795 227.5h1M795 238.5h1M795 249.5h1M795 260.5h1M795 282.5h1M795 293.5h1M795 304.5h1M795 315.5h1M795 338.5h1M795 349.5h1M795 360.5h1M795 371.5h1M795 393.5h1M795 404.5h1M795 415.5h1M795 426.5h1M795 448.5h1M795 459.5h1M795 471.5h1M795 482.5h1M795 504.5h1M795 515.5h1M795 526.5h1M795 537.5h1M795 559.5h1M795 570.5h1M795 581.5h1M795 592.5h1M795 615.5h1M795 626.5h1M795 637.5h1M795 648.5h1M910 227.5h1M910 238.5h1M910 249.5h1M910 260.5h1M910 282.5h1M910 293.5h1M910 304.5h1M910 315.5h1M910 338.5h1M910 349.5h1M910 360.5h1M910 371.5h1M910 393.5h1M910 404.5h1M910 415.5h1M910 426.5h1M910 448.5h1M910 459.5h1M910 471.5h1M910 482.5h1M910 504.5h1M910 515.5h1M910 526.5h1M910 537.5h1M910 559.5h1M910 570.5h1M910 581.5h1M910 592.5h1M910 615.5h1M910 626.5h1M910 637.5h1M910 648.5h1M1025 227.5h1M1025 238.5h1M1025 249.5h1M1025 260.5h1M1025 282.5h1M1025 293.5h1M1025 304.5h1M1025 315.5h1M1025 338.5h1M1025 349.5h1M1025 360.5h1M1025 371.5h1M1025 393.5h1M1025 404.5h1M1025 415.5h1M1025 426.5h1M1025 448.5h1M1025 459.5h1M1025 471.5h1M1025 482.5h1M1025 504.5h1M1025 515.5h1M1025 526.5h1M1025 537.5h1M1025 559.5h1M1025 570.5h1M1025 581.5h1M1025 592.5h1M1025 615.5h1M1025 626.5h1M1025 637.5h1M1025 648.5h1M1140 227.5h1M1140 238.5h1M1140 249.5h1M1140 260.5h1M1140 282.5h1M1140 293.5h1M1140 304.5h1M1140 315.5h1M1140 338.5h1M1140 349.5h1M1140 360.5h1M1140 371.5h1M1140 393.5h1M1140 404.5h1M1140 415.5h1M1140 426.5h1M1140 448.5h1M1140 459.5h1M1140 471.5h1M1140 482.5h1M1140 504.5h1M1140 515.5h1M1140 526.5h1M1140 537.5h1M1140 559.5h1M1140 570.5h1M1140 581.5h1M1140 592.5h1M1140 615.5h1M1140 626.5h1M1140 637.5h1M1140 648.5h1" stroke="#bcbcbc" stroke-width="1" shape-rendering="crispEdges" fill="none"/>
<polygon fill="#ffff00" points="104.0,620.6 104.0,532.8 112.3,532.3 115.4,532.2 118.3,532.5 119.9,532.7 121.5,532.6 123.2,532.0 123.2,620.6 121.5,620.4 119.0,621.2 117.2,620.5 114.1,621.3 111.1,620.7 108.5,620.4"/>
<rect x="122" y="242.6" width="1" height="170" fill="#f0e85a"/>
<polygon fill="#ffff20" points="122,412 123,412 123.5,520 121.8,520"/>
<path fill="#ffff20" d="M121.8,539.0 L121.8,519 L123.5,519 L123.5,527 L124.6,528 L124.9,537 C125.6,538.4 126.6,538.6 129.0,538.5 L129.0,539.5 Z"/>
<polygon fill="#ff0000" points="143.3,623.0 143.3,534.0 145.2,533.8 145.3,530.1 148.7,529.9 148.9,532.8 152.9,532.4 154.8,532.2 157.1,533.1 159.0,532.8 162.1,532.5 165.0,532.2 166.6,532.3 167.6,532.0 167.6,620.6 164.4,620.8 162.1,620.9 159.5,620.6 156.0,621.1 153.9,620.9 151.1,621.3 147.8,620.6 147.5,619.6 146.3,618.4 144.9,621.8"/>
<rect x="166" y="242.6" width="1" height="170" fill="#cc2a2a"/>
<polygon fill="#f01818" points="166,412 167,412 167.4,520 165.8,520"/>
<path fill="#f01818" d="M165.8,539.0 L165.8,519 L167.4,519 L167.5,527 L168.6,528 L168.9,537 C169.6,538.4 170.6,538.6 173.0,538.5 L173.0,539.5 Z"/>
<polygon fill="#ffff00" points="187.1,623.0 187.1,534.0 189.0,533.8 189.1,530.1 192.5,529.9 192.7,532.8 197.1,532.2 199.6,533.0 201.5,532.7 203.1,532.9 206.5,532.8 210.2,532.5 211.4,532.0 211.4,620.6 208.2,621.0 205.2,620.8 201.6,621.3 198.9,621.0 197.3,621.1 194.2,621.4 191.6,620.6 191.3,619.6 190.1,618.4 188.7,621.8"/>
<rect x="210" y="242.6" width="1" height="170" fill="#f0e85a"/>
<polygon fill="#ffff20" points="210,412 211,412 211.4,520 209.8,520"/>
<path fill="#ffff20" d="M209.8,539.0 L209.8,519 L211.4,519 L211.5,527 L212.6,528 L212.9,537 C213.6,538.4 214.6,538.6 217.0,538.5 L217.0,539.5 Z"/>
<polygon fill="#ff0000" points="231.3,623.0 231.3,534.0 233.2,533.8 233.3,530.1 236.7,529.9 236.9,532.8 239.8,532.9 241.3,532.7 243.2,532.2 244.9,533.0 246.7,532.4 249.2,533.1 250.9,532.6 253.8,533.2 255.6,532.0 255.6,620.6 252.1,621.3 249.9,620.8 247.5,621.3 243.6,620.5 241.6,620.6 239.5,620.8 236.6,620.6 235.5,619.6 234.3,618.4 232.9,621.8"/>
<rect x="254" y="242.6" width="1" height="170" fill="#cc2a2a"/>
<polygon fill="#f01818" points="254,412 255,412 255.4,520 253.8,520"/>
<path fill="#f01818" d="M253.8,539.0 L253.8,519 L255.4,519 L255.5,527 L256.6,528 L256.9,537 C257.6,538.4 258.6,538.6 261.0,538.5 L261.0,539.5 Z"/>
<polygon fill="#ffff00" points="275.1,623.0 275.1,534.0 277.0,533.8 277.1,530.1 280.5,529.9 280.7,532.8 282.6,532.6 285.0,532.8 288.9,532.9 291.7,532.8 294.9,532.2 298.6,533.0 299.4,532.0 299.4,620.6 295.7,621.2 293.2,620.7 291.5,621.0 289.8,620.4 287.8,620.5 285.4,620.4 283.9,620.5 282.2,620.7 280.6,621.3 279.3,619.6 278.1,618.4 276.7,621.8"/>
<rect x="298" y="242.6" width="1" height="170" fill="#f0e85a"/>
<polygon fill="#ffff20" points="298,412 299,412 299.4,520 297.9,520"/>
<path fill="#ffff20" d="M297.9,539.0 L297.9,519 L299.4,519 L299.5,527 L300.6,528 L300.9,537 C301.6,538.4 302.6,538.6 305.0,538.5 L305.0,539.5 Z"/>
<polygon fill="#ff0000" points="319.2,623.0 319.2,534.0 321.1,533.8 321.2,530.1 324.6,529.9 324.8,532.8 328.2,532.3 330.4,532.5 332.8,532.2 336.4,533.3 339.1,532.7 340.8,532.2 343.1,532.4 343.5,532.0 343.5,620.6 339.9,620.5 338.4,621.3 335.5,620.5 332.7,620.3 329.9,621.4 326.2,621.1 324.1,620.7 323.4,619.6 322.2,618.4 320.8,621.8"/>
<rect x="342" y="242.6" width="1" height="170" fill="#cc2a2a"/>
<polygon fill="#f01818" points="342,412 343,412 343.4,520 341.9,520"/>
<path fill="#f01818" d="M341.9,539.0 L341.9,519 L343.4,519 L343.5,527 L344.6,528 L344.9,537 C345.6,538.4 346.6,538.6 349.0,538.5 L349.0,539.5 Z"/>
<polygon fill="#ffff00" points="363.0,623.0 363.0,534.0 364.9,533.8 365.0,530.1 368.4,529.9 368.6,532.8 370.9,533.0 373.7,533.0 376.1,532.4 379.6,533.3 383.2,533.1 386.8,533.0 387.3,532.0 387.3,620.6 385.2,620.9 382.8,620.3 381.3,620.6 379.1,621.1 375.2,620.8 371.4,621.4 367.5,620.7 367.2,619.6 366.0,618.4 364.6,621.8"/>
<rect x="386" y="242.6" width="1" height="170" fill="#f0e85a"/>
<polygon fill="#ffff20" points="386,412 387,412 387.4,520 385.9,520"/>
<path fill="#ffff20" d="M385.9,539.0 L385.9,519 L387.4,519 L387.5,527 L388.6,528 L388.9,537 C389.6,538.4 390.6,538.6 393.0,538.5 L393.0,539.5 Z"/>
<polygon fill="#ff0000" points="407.4,623.0 407.4,534.0 409.3,533.8 409.4,530.1 412.8,529.9 413.0,532.8 415.5,532.4 417.4,532.3 420.5,533.2 424.1,532.7 427.2,533.1 428.9,532.9 431.7,533.0 431.7,532.0 431.7,620.6 428.3,620.8 426.4,621.2 424.0,621.2 420.1,620.7 417.6,621.3 414.3,620.5 412.5,620.5 411.6,619.6 410.4,618.4 409.0,621.8"/>
<rect x="430" y="242.6" width="1" height="170" fill="#cc2a2a"/>
<polygon fill="#f01818" points="430,412 431,412 431.4,520 429.9,520"/>
<path fill="#f01818" d="M429.9,539.0 L429.9,519 L431.4,519 L431.5,527 L432.6,528 L432.9,537 C433.6,538.4 434.6,538.6 437.0,538.5 L437.0,539.5 Z"/>
<polygon fill="#ffff00" points="450.9,623.0 450.9,534.0 452.8,533.8 452.9,530.1 456.3,529.9 456.5,532.8 460.7,533.1 462.5,533.1 466.5,532.9 468.9,532.8 470.7,532.1 474.6,532.9 475.2,532.0 475.2,620.6 472.4,621.3 469.8,621.3 466.2,620.5 464.1,620.6 462.0,620.9 459.9,620.8 458.0,621.3 455.6,620.8 455.1,619.6 453.9,618.4 452.5,621.8"/>
<rect x="474" y="242.6" width="1" height="170" fill="#f0e85a"/>
<polygon fill="#ffff20" points="474,412 475,412 475.4,520 473.9,520"/>
<path fill="#ffff20" d="M473.9,539.0 L473.9,519 L475.4,519 L475.5,527 L476.6,528 L476.9,537 C477.6,538.4 478.6,538.6 481.0,538.5 L481.0,539.5 Z"/>
<polygon fill="#ff0000" points="495.5,623.0 495.5,534.0 497.4,533.8 497.5,530.1 500.9,529.9 501.1,532.8 504.5,533.2 507.0,533.2 509.8,532.7 512.6,532.1 515.2,532.3 516.7,533.1 518.6,532.7 519.8,532.0 519.8,620.6 516.5,620.9 514.2,620.9 511.3,621.2 509.5,620.9 507.4,620.6 504.0,620.9 501.1,621.1 499.7,619.6 498.5,618.4 497.1,621.8"/>
<rect x="518" y="242.6" width="1.7" height="170" fill="#cc2a2a"/>
<polygon fill="#f01818" points="518,412 519.7,412 520.2,520 517.9,520"/>
<path fill="#f01818" d="M517.9,539.0 L517.9,519 L520.2,519 L520.2,527 L521.3,528 L521.6,537 C522.3,538.4 523.3,538.6 525.7,538.5 L525.7,539.5 Z"/>
<polygon fill="#ffff00" points="540.2,623.0 540.2,534.0 542.1,533.8 542.2,530.1 545.6,529.9 545.8,532.8 550.0,532.6 553.0,532.7 555.8,532.9 558.4,532.7 561.1,533.2 564.4,533.2 564.5,532.0 564.5,620.6 560.6,620.6 557.7,621.3 554.1,620.5 552.3,620.8 550.7,620.6 549.0,621.0 545.5,621.3 544.4,619.6 543.2,618.4 541.8,621.8"/>
<rect x="563" y="242.6" width="1" height="170" fill="#f0e85a"/>
<polygon fill="#ffff20" points="563,412 564,412 564.5,520 562.9,520"/>
<path fill="#ffff20" d="M562.9,539.0 L562.9,519 L564.5,519 L564.5,527 L565.6,528 L565.9,537 C566.6,538.4 567.6,538.6 570.0,538.5 L570.0,539.5 Z"/>
<polygon fill="#ff0000" points="585.2,623.0 585.2,534.0 587.1,533.8 587.2,530.1 590.6,529.9 590.8,532.8 593.1,533.0 596.2,532.3 599.9,533.3 602.0,533.2 604.5,532.7 608.5,533.1 609.5,532.0 609.5,620.6 607.6,620.8 604.8,620.7 602.8,620.7 599.5,620.3 596.6,620.8 595.1,620.7 592.0,620.9 590.4,621.4 589.4,619.6 588.2,618.4 586.8,621.8"/>
<rect x="608" y="242.6" width="1" height="170" fill="#cc2a2a"/>
<polygon fill="#f01818" points="608,412 609,412 609.5,520 607.9,520"/>
<path fill="#f01818" d="M607.9,539.0 L607.9,519 L609.5,519 L609.5,527 L610.6,528 L610.9,537 C611.6,538.4 612.6,538.6 615.0,538.5 L615.0,539.5 Z"/>
<polygon fill="#ffff00" points="630.2,623.0 630.2,534.0 632.1,533.8 632.2,530.1 635.6,529.9 635.8,532.8 639.7,533.3 641.4,532.4 643.0,533.0 645.2,532.3 647.8,533.2 651.3,532.4 653.2,533.2 654.5,532.0 654.5,620.6 651.6,621.1 649.8,620.4 646.6,620.8 644.9,621.3 641.9,621.2 640.2,621.2 638.5,621.2 635.9,620.7 634.4,619.6 633.2,618.4 631.8,621.8"/>
<rect x="653" y="242.6" width="1" height="170" fill="#f0e85a"/>
<polygon fill="#ffff20" points="653,412 654,412 654.5,520 652.9,520"/>
<path fill="#ffff20" d="M652.9,539.0 L652.9,519 L654.5,519 L654.5,527 L655.6,528 L655.9,537 C656.6,538.4 657.6,538.6 660.0,538.5 L660.0,539.5 Z"/>
<polygon fill="#ff0000" points="676.1,623.0 676.1,534.0 678.0,533.8 678.1,530.1 681.5,529.9 681.7,532.8 685.0,533.2 687.2,532.3 690.0,532.4 691.7,532.3 693.4,532.3 695.6,532.5 699.0,532.4 700.4,532.0 700.4,620.6 697.6,620.5 695.3,620.3 693.2,620.3 689.8,620.9 687.8,620.8 684.0,620.4 680.6,620.8 680.3,619.6 679.1,618.4 677.7,621.8"/>
<rect x="699" y="242.6" width="1" height="170" fill="#cc2a2a"/>
<polygon fill="#f01818" points="699,412 700,412 700.5,520 698.9,520"/>
<path fill="#f01818" d="M698.9,539.0 L698.9,519 L700.5,519 L700.5,527 L701.6,528 L701.9,537 C702.6,538.4 703.6,538.6 706.0,538.5 L706.0,539.5 Z"/>
<polygon fill="#ffff00" points="721.1,623.0 721.1,534.0 723.0,533.8 723.1,530.1 726.5,529.9 726.7,532.8 729.8,533.1 732.3,532.7 735.5,533.3 737.9,533.1 741.2,532.9 743.7,532.5 745.4,532.0 745.4,620.6 743.8,620.4 742.1,621.1 739.9,620.5 738.2,621.2 734.6,621.0 732.4,620.6 730.1,620.8 728.2,620.8 726.1,621.4 725.3,619.6 724.1,618.4 722.7,621.8"/>
<rect x="744" y="242.6" width="1" height="170" fill="#f0e85a"/>
<polygon fill="#ffff20" points="744,412 745,412 745.5,520 743.9,520"/>
<path fill="#ffff20" d="M743.9,539.0 L743.9,519 L745.5,519 L745.5,527 L746.6,528 L746.9,537 C747.6,538.4 748.6,538.6 751.0,538.5 L751.0,539.5 Z"/>
<polygon fill="#ff0000" points="765.2,623.0 765.2,534.0 767.1,533.8 767.2,530.1 770.6,529.9 770.8,532.8 775.1,532.8 777.2,533.3 779.5,532.5 781.0,532.6 783.7,532.7 785.7,532.7 787.2,532.4 788.9,532.6 789.5,532.0 789.5,620.6 787.9,620.3 785.6,620.6 782.7,620.9 779.3,621.0 776.0,621.3 773.5,620.7 769.7,620.5 769.4,619.6 768.2,618.4 766.8,621.8"/>
<rect x="788" y="242.6" width="1" height="170" fill="#cc2a2a"/>
<polygon fill="#f01818" points="788,412 789,412 789.5,520 787.9,520"/>
<path fill="#f01818" d="M787.9,539.0 L787.9,519 L789.5,519 L789.5,527 L790.6,528 L790.9,537 C791.6,538.4 792.6,538.6 795.0,538.5 L795.0,539.5 Z"/>
<polygon fill="#ffff00" points="810.2,623.0 810.2,534.0 812.1,533.8 812.2,530.1 815.6,529.9 815.8,532.8 819.5,532.9 821.1,533.1 824.8,532.9 828.2,533.1 830.0,532.7 832.8,533.1 834.5,532.0 834.5,620.6 831.0,621.2 828.0,621.3 824.8,621.1 822.7,620.3 820.9,620.7 819.2,621.2 816.3,621.0 814.7,621.0 814.4,619.6 813.2,618.4 811.8,621.8"/>
<rect x="833" y="242.6" width="1" height="170" fill="#f0e85a"/>
<polygon fill="#ffff20" points="833,412 834,412 834.5,520 832.9,520"/>
<path fill="#ffff20" d="M832.9,539.0 L832.9,519 L834.5,519 L834.5,527 L835.6,528 L835.9,537 C836.6,538.4 837.6,538.6 840.0,538.5 L840.0,539.5 Z"/>
<rect x="148.2" y="534" width="1.1" height="88" fill="#300"/>
<rect x="680.9" y="534" width="1.1" height="88" fill="#300"/>
<rect x="104" y="538.5" width="746.0" height="1" fill="#3fdcd6" shape-rendering="crispEdges"/>
<rect x="105.5" y="536.5" width="2.2" height="5" fill="#19e35a"/><rect x="108.0" y="539.3" width="2.5" height="1.6" fill="#2fe070"/><rect x="115.5" y="538.3" width="3.2" height="1.2" fill="#2fe070"/><rect x="124.7" y="538.1" width="3.5" height="1.2" fill="#ffffd0"/><rect x="143.8" y="536.5" width="2.2" height="5" fill="#19e35a"/><rect x="150.9" y="538.9" width="2.5" height="1.5" fill="#2fe070"/><rect x="159.3" y="539.2" width="1.4" height="1.2" fill="#2fe070"/><rect x="162.7" y="538.6" width="1.0" height="1.5" fill="#2fe070"/><rect x="169.1" y="538.1" width="3.5" height="1.2" fill="#ffe0e0"/><rect x="187.6" y="536.5" width="2.2" height="5" fill="#19e35a"/><rect x="190.1" y="538.9" width="3.0" height="1.4" fill="#2fe070"/><rect x="206.9" y="538.5" width="2.3" height="1.8" fill="#2fe070"/><rect x="212.9" y="538.1" width="3.5" height="1.2" fill="#ffffd0"/><rect x="231.8" y="536.5" width="2.2" height="5" fill="#19e35a"/><rect x="234.3" y="538.9" width="2.7" height="1.8" fill="#2fe070"/><rect x="237.9" y="539.4" width="3.5" height="1.6" fill="#2fe070"/><rect x="242.4" y="538.2" width="3.7" height="1.0" fill="#2fe070"/><rect x="247.8" y="538.4" width="2.4" height="1.3" fill="#2fe070"/><rect x="251.5" y="539.3" width="3.5" height="1.7" fill="#2fe070"/><rect x="257.1" y="538.1" width="3.5" height="1.2" fill="#ffe0e0"/><rect x="275.6" y="536.5" width="2.2" height="5" fill="#19e35a"/><rect x="284.6" y="538.8" width="1.9" height="1.8" fill="#2fe070"/><rect x="288.5" y="538.6" width="2.1" height="1.0" fill="#2fe070"/><rect x="291.3" y="539.5" width="3.5" height="1.2" fill="#2fe070"/><rect x="296.0" y="538.7" width="2.5" height="1.8" fill="#2fe070"/><rect x="300.9" y="538.1" width="3.5" height="1.2" fill="#ffffd0"/><rect x="319.7" y="536.5" width="2.2" height="5" fill="#19e35a"/><rect x="328.4" y="539.2" width="3.8" height="1.0" fill="#2fe070"/><rect x="339.0" y="539.5" width="1.9" height="1.1" fill="#2fe070"/><rect x="345.0" y="538.1" width="3.5" height="1.2" fill="#ffe0e0"/><rect x="363.5" y="536.5" width="2.2" height="5" fill="#19e35a"/><rect x="366.0" y="539.2" width="2.0" height="1.8" fill="#2fe070"/><rect x="369.2" y="539.0" width="3.0" height="1.3" fill="#2fe070"/><rect x="373.1" y="539.5" width="1.5" height="1.4" fill="#2fe070"/><rect x="380.9" y="538.3" width="1.4" height="1.3" fill="#2fe070"/><rect x="383.1" y="539.0" width="1.7" height="1.7" fill="#2fe070"/><rect x="388.8" y="538.1" width="3.5" height="1.2" fill="#ffffd0"/><rect x="407.9" y="536.5" width="2.2" height="5" fill="#19e35a"/><rect x="410.4" y="538.9" width="2.2" height="1.3" fill="#2fe070"/><rect x="414.0" y="539.6" width="1.2" height="1.1" fill="#2fe070"/><rect x="420.9" y="538.8" width="1.8" height="1.4" fill="#2fe070"/><rect x="433.2" y="538.1" width="3.5" height="1.2" fill="#ffe0e0"/><rect x="451.4" y="536.5" width="2.2" height="5" fill="#19e35a"/><rect x="470.1" y="538.9" width="1.3" height="1.5" fill="#2fe070"/><rect x="476.7" y="538.1" width="3.5" height="1.2" fill="#ffffd0"/><rect x="496.0" y="536.5" width="2.2" height="5" fill="#19e35a"/><rect x="507.0" y="539.5" width="3.3" height="1.5" fill="#2fe070"/><rect x="511.7" y="539.1" width="1.4" height="1.6" fill="#2fe070"/><rect x="513.8" y="539.0" width="1.2" height="1.3" fill="#2fe070"/><rect x="516.1" y="538.6" width="2.8" height="1.4" fill="#2fe070"/><rect x="521.3" y="538.1" width="3.5" height="1.2" fill="#ffe0e0"/><rect x="540.7" y="536.5" width="2.2" height="5" fill="#19e35a"/><rect x="547.8" y="539.5" width="1.7" height="1.6" fill="#2fe070"/><rect x="550.8" y="539.1" width="1.1" height="1.3" fill="#2fe070"/><rect x="557.1" y="538.8" width="1.1" height="1.5" fill="#2fe070"/><rect x="566.0" y="538.1" width="3.5" height="1.2" fill="#ffffd0"/><rect x="585.7" y="536.5" width="2.2" height="5" fill="#19e35a"/><rect x="591.1" y="538.5" width="3.5" height="1.6" fill="#2fe070"/><rect x="595.8" y="538.5" width="3.9" height="1.2" fill="#2fe070"/><rect x="605.1" y="539.6" width="2.2" height="1.1" fill="#2fe070"/><rect x="611.0" y="538.1" width="3.5" height="1.2" fill="#ffe0e0"/><rect x="630.7" y="536.5" width="2.2" height="5" fill="#19e35a"/><rect x="633.2" y="539.5" width="1.2" height="1.7" fill="#2fe070"/><rect x="648.5" y="538.4" width="2.1" height="1.0" fill="#2fe070"/><rect x="656.0" y="538.1" width="3.5" height="1.2" fill="#ffffd0"/><rect x="676.6" y="536.5" width="2.2" height="5" fill="#19e35a"/><rect x="682.0" y="538.7" width="3.9" height="1.7" fill="#2fe070"/><rect x="688.4" y="538.9" width="2.3" height="1.3" fill="#2fe070"/><rect x="693.5" y="539.5" width="1.6" height="1.0" fill="#2fe070"/><rect x="701.9" y="538.1" width="3.5" height="1.2" fill="#ffe0e0"/><rect x="721.6" y="536.5" width="2.2" height="5" fill="#19e35a"/><rect x="724.1" y="539.5" width="1.1" height="1.2" fill="#2fe070"/><rect x="727.6" y="538.6" width="3.7" height="1.8" fill="#2fe070"/><rect x="736.4" y="539.3" width="1.8" height="1.7" fill="#2fe070"/><rect x="740.3" y="538.5" width="3.8" height="1.4" fill="#2fe070"/><rect x="746.9" y="538.1" width="3.5" height="1.2" fill="#ffffd0"/><rect x="765.7" y="536.5" width="2.2" height="5" fill="#19e35a"/><rect x="768.2" y="538.6" width="3.9" height="1.3" fill="#2fe070"/><rect x="773.8" y="539.3" width="3.8" height="1.6" fill="#2fe070"/><rect x="784.8" y="539.3" width="2.0" height="1.1" fill="#2fe070"/><rect x="791.0" y="538.1" width="3.5" height="1.2" fill="#ffe0e0"/><rect x="810.7" y="536.5" width="2.2" height="5" fill="#19e35a"/><rect x="813.2" y="538.3" width="3.3" height="1.0" fill="#2fe070"/><rect x="823.0" y="538.3" width="4.0" height="1.1" fill="#2fe070"/><rect x="828.7" y="538.5" width="3.1" height="1.3" fill="#2fe070"/><rect x="836.0" y="538.1" width="3.5" height="1.2" fill="#ffffd0"/><rect x="115.6" y="538.4" width="1.6" height="1.1" fill="#30e878"/><rect x="124.9" y="537.8" width="1.5" height="1.1" fill="#30e878"/><rect x="131.8" y="538.0" width="3.0" height="1.1" fill="#30e878"/><rect x="135.8" y="538.3" width="2.3" height="1.1" fill="#30e878"/><rect x="141.8" y="538.0" width="2.6" height="1.1" fill="#30e878"/><rect x="149.3" y="537.7" width="1.4" height="1.1" fill="#30e878"/><rect x="175.2" y="538.1" width="2.2" height="1.1" fill="#30e878"/><rect x="180.6" y="537.8" width="2.2" height="1.1" fill="#30e878"/><rect x="185.3" y="537.6" width="1.7" height="1.1" fill="#30e878"/><rect x="190.0" y="537.9" width="1.4" height="1.1" fill="#30e878"/><rect x="197.4" y="538.0" width="2.1" height="1.1" fill="#30e878"/><rect x="202.0" y="537.7" width="2.4" height="1.1" fill="#30e878"/><rect x="205.6" y="537.9" width="2.9" height="1.1" fill="#30e878"/><rect x="221.2" y="538.3" width="1.4" height="1.1" fill="#30e878"/><rect x="234.4" y="537.6" width="2.1" height="1.1" fill="#30e878"/><rect x="247.4" y="538.1" width="2.9" height="1.1" fill="#30e878"/><rect x="257.8" y="538.4" width="3.0" height="1.1" fill="#30e878"/><rect x="261.7" y="538.4" width="1.8" height="1.1" fill="#30e878"/><rect x="272.7" y="538.3" width="1.4" height="1.1" fill="#30e878"/><rect x="281.6" y="537.8" width="1.8" height="1.1" fill="#30e878"/><rect x="288.1" y="538.3" width="2.8" height="1.1" fill="#30e878"/><rect x="295.3" y="538.4" width="1.2" height="1.1" fill="#30e878"/><rect x="304.3" y="538.0" width="2.2" height="1.1" fill="#30e878"/><rect x="317.8" y="538.3" width="2.6" height="1.1" fill="#30e878"/><rect x="321.6" y="538.0" width="1.2" height="1.1" fill="#30e878"/><rect x="330.5" y="538.2" width="1.2" height="1.1" fill="#30e878"/><rect x="339.5" y="538.1" width="1.8" height="1.1" fill="#30e878"/><rect x="345.3" y="538.4" width="3.0" height="1.1" fill="#30e878"/><rect x="362.7" y="538.3" width="2.9" height="1.1" fill="#30e878"/><rect x="370.0" y="538.4" width="1.5" height="1.1" fill="#30e878"/><rect x="375.2" y="538.1" width="2.8" height="1.1" fill="#30e878"/><rect x="378.0" y="538.1" width="1.6" height="1.1" fill="#30e878"/><rect x="380.2" y="537.7" width="2.9" height="1.1" fill="#30e878"/><rect x="416.5" y="538.5" width="2.2" height="1.1" fill="#30e878"/><rect x="423.7" y="538.3" width="1.1" height="1.1" fill="#30e878"/><rect x="429.0" y="538.2" width="3.0" height="1.1" fill="#30e878"/><rect x="436.6" y="537.6" width="1.3" height="1.1" fill="#30e878"/><rect x="447.7" y="538.2" width="1.0" height="1.1" fill="#30e878"/><rect x="459.3" y="538.2" width="1.9" height="1.1" fill="#30e878"/><rect x="464.9" y="537.7" width="2.3" height="1.1" fill="#30e878"/><rect x="474.0" y="537.6" width="2.3" height="1.1" fill="#30e878"/><rect x="497.3" y="537.7" width="2.6" height="1.1" fill="#30e878"/><rect x="505.1" y="537.8" width="2.2" height="1.1" fill="#30e878"/><rect x="514.4" y="537.9" width="1.6" height="1.1" fill="#30e878"/><rect x="536.6" y="537.8" width="1.1" height="1.1" fill="#30e878"/><rect x="549.6" y="538.1" width="1.9" height="1.1" fill="#30e878"/><rect x="563.7" y="538.4" width="1.0" height="1.1" fill="#30e878"/><rect x="566.7" y="538.3" width="2.9" height="1.1" fill="#30e878"/><rect x="571.7" y="538.4" width="1.7" height="1.1" fill="#30e878"/><rect x="600.5" y="537.8" width="2.2" height="1.1" fill="#30e878"/><rect x="605.4" y="537.7" width="2.9" height="1.1" fill="#30e878"/><rect x="608.8" y="537.6" width="1.1" height="1.1" fill="#30e878"/><rect x="639.7" y="537.7" width="1.1" height="1.1" fill="#30e878"/><rect x="654.2" y="537.7" width="1.2" height="1.1" fill="#30e878"/><rect x="659.2" y="537.9" width="1.8" height="1.1" fill="#30e878"/><rect x="661.3" y="537.9" width="2.4" height="1.1" fill="#30e878"/><rect x="664.7" y="538.5" width="2.0" height="1.1" fill="#30e878"/><rect x="683.6" y="538.4" width="1.2" height="1.1" fill="#30e878"/><rect x="688.8" y="537.6" width="1.4" height="1.1" fill="#30e878"/><rect x="712.2" y="538.2" width="2.0" height="1.1" fill="#30e878"/><rect x="735.4" y="538.4" width="1.1" height="1.1" fill="#30e878"/><rect x="738.2" y="538.4" width="2.0" height="1.1" fill="#30e878"/><rect x="757.2" y="537.7" width="2.7" height="1.1" fill="#30e878"/><rect x="777.7" y="537.8" width="1.6" height="1.1" fill="#30e878"/><rect x="785.1" y="537.8" width="1.7" height="1.1" fill="#30e878"/><rect x="789.2" y="537.9" width="1.4" height="1.1" fill="#30e878"/><rect x="816.0" y="537.9" width="1.1" height="1.1" fill="#30e878"/>
</svg>
<svg class="b" style="left:0px;top:0px" width="1351" height="216" viewBox="0 0 1351 216" ><rect x="112.2" y="185" width="23.8" height="23.8" fill="#000"/><path d="M114.6 197.4 L123.5 188.3 L133.4 193.4" fill="none" stroke="#2fe03a" stroke-width="1.7"/><rect x="123" y="187" width="1" height="20" fill="#fff"/><text x="114.9" y="205.9" font-family="Liberation Sans" font-size="9.6" fill="#f0f0f0">0</text><rect x="141" y="182" width="1" height="30" fill="#8e8e8e"/><rect x="149.3" y="186.5" width="6.6" height="4" fill="#22d83a" stroke="#0c7a1a" stroke-width="0.7"/><path d="M156 188.5 H172.5" stroke="#555" stroke-width="0.8"/><rect x="149.3" y="195" width="6.6" height="4" fill="#28d8e8" stroke="#0e7a86" stroke-width="0.7"/><path d="M156 197 H172.5" stroke="#555" stroke-width="0.8"/><rect x="149.3" y="203.2" width="6.6" height="4" fill="#2280e0" stroke="#0c3a80" stroke-width="0.7"/><path d="M156 205.2 H172.5" stroke="#555" stroke-width="0.8"/><path d="M168 189 V205" stroke="#000" stroke-width="0.9"/><path d="M166.4 191.5 L168 188.8 L169.6 191.5 Z M166.4 194.5 L168 197 L169.6 194.5 Z M166.4 200 L168 197.4 L169.6 200 Z M166.4 202.6 L168 205.2 L169.6 202.6 Z" fill="#000"/><rect x="178" y="182" width="1" height="30" fill="#8e8e8e"/><rect x="186.5" y="186.8" width="23.2" height="21.4" fill="#fff" stroke="#6a6a6a" stroke-width="1"/><rect x="187" y="187.3" width="22.2" height="3.8" fill="#d0d0d0"/><path d="M192.5 187 V191 M198 187 V191 M203.5 187 V191" stroke="#888" stroke-width="0.8"/><path d="M189.5 194.5 H207" stroke="#000" stroke-width="1" stroke-dasharray="3.2 1.2"/><path d="M189.5 198 H207" stroke="#000" stroke-width="1" stroke-dasharray="3.2 1.2"/><path d="M189.5 201.5 H207" stroke="#000" stroke-width="1" stroke-dasharray="3.2 1.2"/><path d="M189.5 205 H207" stroke="#000" stroke-width="1" stroke-dasharray="3.2 1.2"/><rect x="217" y="185" width="24.1" height="23.8" fill="#000"/><path d="M218.6 197.4 L229 188.6 L239.8 193.8" fill="none" stroke="#2fe03a" stroke-width="1.7"/><rect x="222" y="187" width="1" height="20" fill="#fff"/><rect x="235" y="187" width="1" height="20" fill="#fff"/><rect x="248.1" y="185" width="24" height="23.8" fill="#000"/><path d="M249.6 197.4 L260.1 188.6 L270.9 193.8" fill="none" stroke="#2fe03a" stroke-width="1.7"/><rect x="250" y="190" width="20.2" height="1" fill="#fff"/><rect x="250" y="203" width="20.2" height="1" fill="#fff"/><rect x="279.2" y="185" width="23.8" height="23.8" fill="#b4b4b4"/><path d="M284.3 186.4 V207.4 M297.6 186.4 V207.4 M280.6 190.5 H301.6 M280.6 203.5 H301.6" stroke="#dcdcdc" stroke-width="1.1"/><circle cx="291" cy="197" r="3.8" fill="none" stroke="#c6c6c6" stroke-width="1.3" stroke-dasharray="9 3"/><rect x="308" y="182" width="1" height="30" fill="#8e8e8e"/><path d="M330.2 199.2 L338.4 207" stroke="#e01a1a" stroke-width="3" stroke-linecap="round"/><circle cx="324.2" cy="193.5" r="7.4" fill="#f1f8fa" stroke="#000" stroke-width="1.3"/><path d="M320.2 193.5 H328.2 M324.2 189.5 V197.5" stroke="#000" stroke-width="1.1"/><path d="M361.3 199.2 L369.5 207" stroke="#c4c4c4" stroke-width="3" stroke-linecap="round"/><circle cx="355.3" cy="193.5" r="7.4" fill="#f1f8fa" stroke="#bdbdbd" stroke-width="1.3"/><path d="M351.5 193.5 H359" stroke="#bdbdbd" stroke-width="1.1"/><path d="M392.4 199.2 L400.6 207" stroke="#e01a1a" stroke-width="3" stroke-linecap="round"/><circle cx="386.4" cy="193.5" r="7.4" fill="#f1f8fa" stroke="#000" stroke-width="1.3"/><path d="M383.4 190.3 V196.8 M389.4 190.3 V196.8" stroke="#000" stroke-width="1.2"/><circle cx="386.4" cy="192" r="0.7"/><circle cx="386.4" cy="195.3" r="0.7"/><rect x="407" y="182" width="1" height="30" fill="#8e8e8e"/><path d="M416 188.3 H438" stroke="#3fd04a" stroke-width="0.9"/><path d="M421.5 187.3 L430 201.5 M433 187.3 L424.6 201.5" stroke="#000" stroke-width="2.4" stroke-linecap="round"/><circle cx="422.4" cy="204.6" r="3.1" fill="#fff" stroke="#000" stroke-width="1.9"/><circle cx="432.2" cy="204.6" r="3.1" fill="#fff" stroke="#000" stroke-width="1.9"/><rect x="444" y="182" width="1" height="30" fill="#8e8e8e"/><path d="M454 197 C460 189.5 471 189.5 477.5 197 C471 204.5 460 204.5 454 197 Z" fill="#f4f4f4" stroke="#c9c9c9" stroke-width="1.2"/><circle cx="465.7" cy="197" r="3.8" fill="#d0d0d0"/><circle cx="465.7" cy="197" r="1.6" fill="#b8b8b8"/><path d="M455.5 206.5 L476 189 M459 188.6 L467 197 L462 203 L470 207.4 L476.5 201" stroke="#d4d4d4" stroke-width="1" fill="none"/><rect x="1085.8" y="185.6" width="22.6" height="12.6" rx="2.2" fill="#fbf77e" stroke="#111" stroke-width="1.1"/><path d="M1097.8 198.6 L1106 206" stroke="#000" stroke-width="1.2"/><path d="M1109 203.8 V208.8 H1103.6 Z" fill="#000"/><rect x="1095.6" y="197.4" width="3.6" height="1.6" fill="#e02020"/><rect x="1116.8" y="190.8" width="22.8" height="12.6" rx="2.2" fill="#fbf77e" stroke="#111" stroke-width="1.1"/><rect x="1126.4" y="202.6" width="3.6" height="1.6" fill="#e02020"/><path d="M1118 187.2 L1138.6 206.4 M1138.6 187.2 L1118 206.4" stroke="#e8484e" stroke-width="2.3" stroke-linecap="round"/><rect x="1145" y="182" width="1" height="30" fill="#8e8e8e"/><rect x="1153" y="185" width="24" height="24" fill="#000"/><rect x="1155.4" y="188.6" width="2.6" height="2.6" fill="#22e03a"/><rect x="1155.4" y="194.4" width="2.6" height="2.6" fill="#28e0f0"/><g transform="translate(1187.2,184.6) rotate(48)"><path d="M0 3.4 L2.6 0 H12.6 V6.8 H2.6 Z" fill="#ef9a1c" stroke="#7a4208" stroke-width="0.9" stroke-linejoin="round"/><path d="M2.6 3.4 H12.6" stroke="#c87810" stroke-width="1"/><rect x="12.6" y="-0.3" width="5.2" height="7.4" fill="#e6e6e6" stroke="#8a8a8a" stroke-width="0.7"/><rect x="17.8" y="-0.3" width="3.6" height="7.4" fill="#c6461a"/></g><path d="M1219 186.6 L1227 194.2 L1235 186.6 L1238 189.6 L1230 197 L1238 204.6 L1235 207.6 L1227 200 L1219 207.6 L1216 204.6 L1224 197 L1216 189.6 Z" fill="#d6d6d6" stroke="#c2c2c2" stroke-width="0.8" stroke-linejoin="round"/></svg><div class="t" style="left:1087.00px;top:186px;font-size:4.6px;line-height:7px;height:7px;color:#4a4a10;transform:scaleX(0.9825);transform-origin:0 0;">Comment</div><div class="t" style="left:1087.00px;top:191px;font-size:4.6px;line-height:7px;height:7px;color:#4a4a10;transform:scaleX(0.9941);transform-origin:0 0;">Text</div><div class="t" style="left:1159.90px;top:185px;font-size:6.8px;line-height:9px;height:9px;color:#e8e8e8;transform:scaleX(0.8560);transform-origin:0 0;">Ch1</div><div class="t" style="left:1159.90px;top:191px;font-size:6.8px;line-height:9px;height:9px;color:#e8e8e8;transform:scaleX(0.8880);transform-origin:0 0;">Ch2</div><svg class="b" style="left:0px;top:0px" width="1351" height="216" viewBox="0 0 1351 216" ><path d="M1249.5 203 H1246.7 V195.6 C1245.9 196.4 1244.8 197 1243.6 197.4 V195.2 C1245.2 194.6 1246.7 193.4 1247.3 192.2 H1249.5 Z" fill="#140808"/></svg>
<div class="b" style="left:17.4px;top:207.5px;width:40.3px;height:16.8px;background:#ff0000;border-radius:4.5px"></div><div class="t" style="left:23.80px;top:209px;font-size:12.3px;line-height:16px;height:16px;color:#5a0000;transform:scaleX(0.8723);transform-origin:0 0;">49.080</div><div class="t" style="left:23.80px;top:265px;font-size:12.3px;line-height:16px;height:16px;color:#ee2424;transform:scaleX(0.8723);transform-origin:0 0;">40.683</div><div class="t" style="left:23.80px;top:320px;font-size:12.3px;line-height:16px;height:16px;color:#ee2424;transform:scaleX(0.8723);transform-origin:0 0;">32.285</div><div class="t" style="left:23.80px;top:376px;font-size:12.3px;line-height:16px;height:16px;color:#ee2424;transform:scaleX(0.8723);transform-origin:0 0;">23.888</div><div class="t" style="left:23.80px;top:431px;font-size:12.3px;line-height:16px;height:16px;color:#ee2424;transform:scaleX(0.8723);transform-origin:0 0;">15.491</div><div class="t" style="left:30.00px;top:487px;font-size:12.3px;line-height:16px;height:16px;color:#ee2424;transform:scaleX(0.8636);transform-origin:0 0;">7.093</div><div class="t" style="left:25.00px;top:542px;font-size:12.3px;line-height:16px;height:16px;color:#ee2424;transform:scaleX(0.9054);transform-origin:0 0;">-1.304</div><div class="t" style="left:25.00px;top:597px;font-size:12.3px;line-height:16px;height:16px;color:#ee2424;transform:scaleX(0.9054);transform-origin:0 0;">-9.702</div><div class="b" style="left:17.4px;top:651.4px;width:40.3px;height:16.8px;background:#ff0000;border-radius:4.5px"></div><div class="t" style="left:19.20px;top:653px;font-size:12.3px;line-height:16px;height:16px;color:#5a0000;transform:scaleX(0.8969);transform-origin:0 0;">-18.099</div><div class="t" style="left:34.00px;top:236px;font-size:12.4px;line-height:16px;height:16px;color:#ee2424;transform:scaleX(0.8000);transform-origin:0 0;">V</div><div class="b" style="left:60.6px;top:207.5px;width:40.6px;height:16.8px;background:#ffff00;border-radius:4.5px"></div><div class="t" style="left:66.50px;top:209px;font-size:12.3px;line-height:16px;height:16px;color:#3c3c00;transform:scaleX(0.8723);transform-origin:0 0;">49.080</div><div class="t" style="left:66.50px;top:265px;font-size:12.3px;line-height:16px;height:16px;color:#eeee3c;transform:scaleX(0.8723);transform-origin:0 0;">40.683</div><div class="t" style="left:66.50px;top:320px;font-size:12.3px;line-height:16px;height:16px;color:#eeee3c;transform:scaleX(0.8723);transform-origin:0 0;">32.285</div><div class="t" style="left:66.50px;top:376px;font-size:12.3px;line-height:16px;height:16px;color:#eeee3c;transform:scaleX(0.8723);transform-origin:0 0;">23.888</div><div class="t" style="left:66.50px;top:431px;font-size:12.3px;line-height:16px;height:16px;color:#eeee3c;transform:scaleX(0.8723);transform-origin:0 0;">15.491</div><div class="t" style="left:72.70px;top:487px;font-size:12.3px;line-height:16px;height:16px;color:#eeee3c;transform:scaleX(0.8636);transform-origin:0 0;">7.093</div><div class="t" style="left:67.70px;top:542px;font-size:12.3px;line-height:16px;height:16px;color:#eeee3c;transform:scaleX(0.9054);transform-origin:0 0;">-1.304</div><div class="t" style="left:67.70px;top:597px;font-size:12.3px;line-height:16px;height:16px;color:#eeee3c;transform:scaleX(0.9054);transform-origin:0 0;">-9.702</div><div class="b" style="left:60.6px;top:651.4px;width:40.6px;height:16.8px;background:#ffff00;border-radius:4.5px"></div><div class="t" style="left:61.90px;top:653px;font-size:12.3px;line-height:16px;height:16px;color:#3c3c00;transform:scaleX(0.8969);transform-origin:0 0;">-18.099</div><div class="t" style="left:76.70px;top:236px;font-size:12.4px;line-height:16px;height:16px;color:#eeee3c;transform:scaleX(0.8000);transform-origin:0 0;">V</div><div class="b" style="left:1259.4px;top:207.5px;width:39.8px;height:16.8px;background:#00ff00;border-radius:4.5px"></div><div class="t" style="left:1265.00px;top:209px;font-size:12.3px;line-height:16px;height:16px;color:#063a06;transform:scaleX(0.8723);transform-origin:0 0;">49.080</div><div class="t" style="left:1265.00px;top:265px;font-size:12.3px;line-height:16px;height:16px;color:#2fd82f;transform:scaleX(0.8723);transform-origin:0 0;">40.683</div><div class="t" style="left:1265.00px;top:320px;font-size:12.3px;line-height:16px;height:16px;color:#2fd82f;transform:scaleX(0.8723);transform-origin:0 0;">32.285</div><div class="t" style="left:1265.00px;top:376px;font-size:12.3px;line-height:16px;height:16px;color:#2fd82f;transform:scaleX(0.8723);transform-origin:0 0;">23.888</div><div class="t" style="left:1265.00px;top:431px;font-size:12.3px;line-height:16px;height:16px;color:#2fd82f;transform:scaleX(0.8723);transform-origin:0 0;">15.491</div><div class="t" style="left:1271.20px;top:487px;font-size:12.3px;line-height:16px;height:16px;color:#2fd82f;transform:scaleX(0.8636);transform-origin:0 0;">7.093</div><div class="t" style="left:1266.20px;top:542px;font-size:12.3px;line-height:16px;height:16px;color:#2fd82f;transform:scaleX(0.9054);transform-origin:0 0;">-1.304</div><div class="t" style="left:1266.20px;top:597px;font-size:12.3px;line-height:16px;height:16px;color:#2fd82f;transform:scaleX(0.9054);transform-origin:0 0;">-9.702</div><div class="b" style="left:1259.4px;top:651.4px;width:39.8px;height:16.8px;background:#00ff00;border-radius:4.5px"></div><div class="t" style="left:1260.40px;top:653px;font-size:12.3px;line-height:16px;height:16px;color:#063a06;transform:scaleX(0.8969);transform-origin:0 0;">-18.099</div><div class="t" style="left:1275.20px;top:236px;font-size:12.4px;line-height:16px;height:16px;color:#2fd82f;transform:scaleX(0.8000);transform-origin:0 0;">V</div><div class="b" style="left:1302.6px;top:207.5px;width:40px;height:16.8px;background:#00ffff;border-radius:4.5px"></div><div class="t" style="left:1307.80px;top:209px;font-size:12.3px;line-height:16px;height:16px;color:#063a40;transform:scaleX(0.8723);transform-origin:0 0;">49.080</div><div class="t" style="left:1307.80px;top:265px;font-size:12.3px;line-height:16px;height:16px;color:#2fd6de;transform:scaleX(0.8723);transform-origin:0 0;">40.683</div><div class="t" style="left:1307.80px;top:320px;font-size:12.3px;line-height:16px;height:16px;color:#2fd6de;transform:scaleX(0.8723);transform-origin:0 0;">32.285</div><div class="t" style="left:1307.80px;top:376px;font-size:12.3px;line-height:16px;height:16px;color:#2fd6de;transform:scaleX(0.8723);transform-origin:0 0;">23.888</div><div class="t" style="left:1307.80px;top:431px;font-size:12.3px;line-height:16px;height:16px;color:#2fd6de;transform:scaleX(0.8723);transform-origin:0 0;">15.491</div><div class="t" style="left:1314.00px;top:487px;font-size:12.3px;line-height:16px;height:16px;color:#2fd6de;transform:scaleX(0.8636);transform-origin:0 0;">7.093</div><div class="t" style="left:1309.00px;top:542px;font-size:12.3px;line-height:16px;height:16px;color:#2fd6de;transform:scaleX(0.9054);transform-origin:0 0;">-1.304</div><div class="t" style="left:1309.00px;top:597px;font-size:12.3px;line-height:16px;height:16px;color:#2fd6de;transform:scaleX(0.9054);transform-origin:0 0;">-9.702</div><div class="b" style="left:1302.6px;top:651.4px;width:40px;height:16.8px;background:#00ffff;border-radius:4.5px"></div><div class="t" style="left:1303.20px;top:653px;font-size:12.3px;line-height:16px;height:16px;color:#063a40;transform:scaleX(0.8969);transform-origin:0 0;">-18.099</div><div class="t" style="left:1318.00px;top:236px;font-size:12.4px;line-height:16px;height:16px;color:#2fd6de;transform:scaleX(0.8000);transform-origin:0 0;">V</div><div class="t" style="left:81.70px;top:680px;font-size:12.3px;line-height:16px;height:16px;color:#f2f2f2;transform:scaleX(0.8585);transform-origin:0 0;">10.7867 s</div><div class="t" style="left:197.10px;top:680px;font-size:12.3px;line-height:16px;height:16px;color:#f2f2f2;transform:scaleX(0.8585);transform-origin:0 0;">10.9024 s</div><div class="t" style="left:312.50px;top:680px;font-size:12.3px;line-height:16px;height:16px;color:#f2f2f2;transform:scaleX(0.8738);transform-origin:0 0;">11.0181 s</div><div class="t" style="left:427.90px;top:680px;font-size:12.3px;line-height:16px;height:16px;color:#f2f2f2;transform:scaleX(0.8738);transform-origin:0 0;">11.1338 s</div><div class="t" style="left:543.30px;top:680px;font-size:12.3px;line-height:16px;height:16px;color:#f2f2f2;transform:scaleX(0.8738);transform-origin:0 0;">11.2495 s</div><div class="t" style="left:658.70px;top:680px;font-size:12.3px;line-height:16px;height:16px;color:#f2f2f2;transform:scaleX(0.8738);transform-origin:0 0;">11.3652 s</div><div class="t" style="left:774.10px;top:680px;font-size:12.3px;line-height:16px;height:16px;color:#f2f2f2;transform:scaleX(0.8738);transform-origin:0 0;">11.4809 s</div><div class="t" style="left:889.50px;top:680px;font-size:12.3px;line-height:16px;height:16px;color:#f2f2f2;transform:scaleX(0.8738);transform-origin:0 0;">11.5966 s</div><div class="t" style="left:1004.90px;top:680px;font-size:12.3px;line-height:16px;height:16px;color:#f2f2f2;transform:scaleX(0.8738);transform-origin:0 0;">11.7123 s</div><div class="t" style="left:1120.30px;top:680px;font-size:12.3px;line-height:16px;height:16px;color:#f2f2f2;transform:scaleX(0.8738);transform-origin:0 0;">11.8280 s</div><div class="t" style="left:1235.70px;top:680px;font-size:12.3px;line-height:16px;height:16px;color:#f2f2f2;transform:scaleX(0.8738);transform-origin:0 0;">11.9437 s</div>
<div class="b" style="left:897.2px;top:288px;width:286.6px;height:57.6px;background:#ffff66;border-radius:2.5px;box-shadow:0 0 0 0.6px #e8e8b0"></div><div class="b" style="left:1036.4px;top:339.2px;width:9.6px;height:7px;background:#ff0000;"></div><div class="t" style="left:902.40px;top:293px;font-size:12.4px;line-height:16px;height:16px;color:#101000;transform:scaleX(0.9526);transform-origin:0 0;">rood cilinder 1 gemeten op pin 32 en 47</div><div class="t" style="left:902.40px;top:308px;font-size:12.4px;line-height:16px;height:16px;color:#101000;transform:scaleX(0.9468);transform-origin:0 0;">geel cilinder 2 gemeten op pin 31 en 46</div><div class="t" style="left:902.40px;top:323px;font-size:12.4px;line-height:16px;height:16px;color:#101000;transform:scaleX(0.9448);transform-origin:0 0;">Fiat 500 met probleem</div>
<div class="b" style="left:0px;top:699.4px;width:1348px;height:20.6px;background:#f0f0f0;"></div>
<div class="b" style="left:0px;top:720px;width:1349px;height:1px;background:#5a5a5a;"></div>
<div class="t" style="left:1.00px;top:704px;font-size:12.4px;line-height:16px;height:16px;color:#000;transform:scaleX(0.9599);transform-origin:0 0;">Klik rechts om instellingen te wijzigen</div>
<svg class="b" style="left:1334px;top:705px" width="14" height="14" viewBox="0 0 14 14" ><rect x="10" y="2" width="2" height="2" fill="#bdbdbd"/><rect x="6" y="6" width="2" height="2" fill="#bdbdbd"/><rect x="10" y="6" width="2" height="2" fill="#bdbdbd"/><rect x="2" y="10" width="2" height="2" fill="#bdbdbd"/><rect x="6" y="10" width="2" height="2" fill="#bdbdbd"/><rect x="10" y="10" width="2" height="2" fill="#bdbdbd"/></svg>
</body></html>
